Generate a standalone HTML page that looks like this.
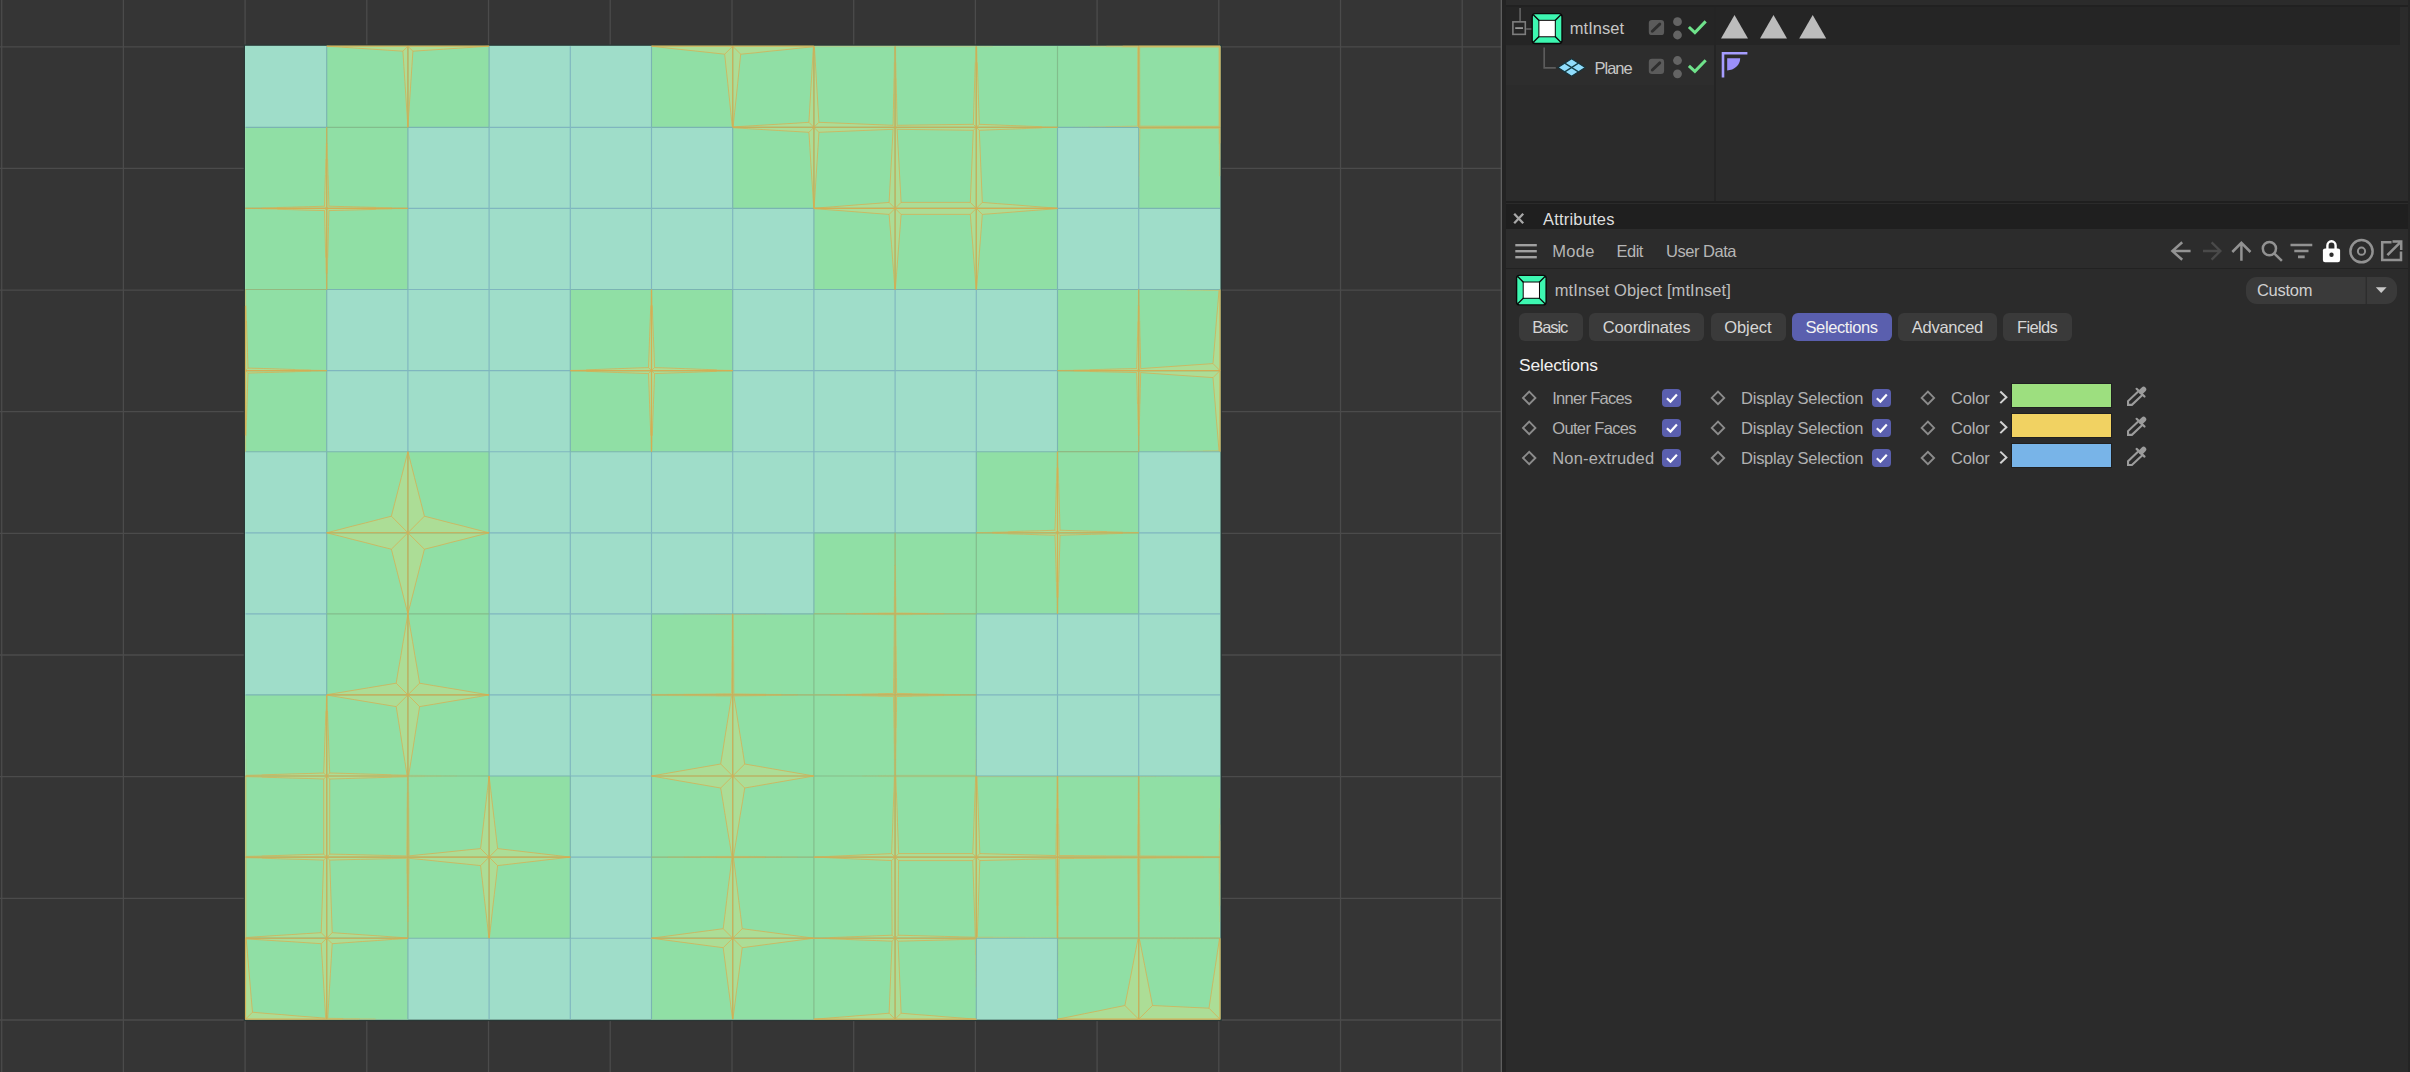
<!DOCTYPE html>
<html><head><meta charset="utf-8"><title>mtInset</title>
<style>
html,body{margin:0;padding:0;background:#2b2b2b;}
body{width:2410px;height:1072px;overflow:hidden;position:relative;font-family:"Liberation Sans",sans-serif;}
.vp{position:absolute;left:0;top:0;display:block}

.t{position:absolute;white-space:nowrap;line-height:1;}
.b{position:absolute;}
.ic{position:absolute;left:0;top:0;}

</style></head><body>
<svg class="vp" width="1502" height="1072" viewBox="0 0 1502 1072">
<rect width="1502" height="1072" fill="#353535"/>
<g stroke="#4b4b4b" stroke-width="1.3"><path d="M1.7 0V1072"/><path d="M123.4 0V1072"/><path d="M245.1 0V1072"/><path d="M366.8 0V1072"/><path d="M488.5 0V1072"/><path d="M610.2 0V1072"/><path d="M732 0V1072"/><path d="M853.7 0V1072"/><path d="M975.4 0V1072"/><path d="M1097.1 0V1072"/><path d="M1218.8 0V1072"/><path d="M1340.5 0V1072"/><path d="M1462.2 0V1072"/><path d="M0 46.8H1501"/><path d="M0 168.4H1501"/><path d="M0 290.1H1501"/><path d="M0 411.7H1501"/><path d="M0 533.4H1501"/><path d="M0 655H1501"/><path d="M0 776.7H1501"/><path d="M0 898.4H1501"/><path d="M0 1020H1501"/></g>
<rect x="245" y="45.8" width="975.5" height="974" fill="none" stroke="#2a3836" stroke-width="2.6"/>
<rect x="245" y="45.8" width="975.5" height="973.9" fill="#9fddc9"/>
<g fill="#acdd96">
<polygon points="326.7,46.2 407.9,46.2 407.9,127.3 326.7,127.3"/>
<polygon points="407.9,46.2 489.1,46.2 489.1,127.3 407.9,127.3"/>
<polygon points="651.5,46.2 732.7,46.2 732.7,127.3 651.5,127.3"/>
<polygon points="732.7,46.2 813.9,46.2 813.9,127.3 732.7,127.3"/>
<polygon points="813.9,46.2 895.1,46.2 895.1,127.3 813.9,127.3"/>
<polygon points="895.1,46.2 976.3,46.2 976.3,127.3 895.1,127.3"/>
<polygon points="976.3,46.2 1057.5,46.2 1057.5,127.3 976.3,127.3"/>
<polygon points="1057.5,46.2 1138.7,46.2 1138.7,127.3 1057.5,127.3"/>
<polygon points="1138.7,46.2 1220,46.2 1220,127.3 1138.7,127.3"/>
<polygon points="245.5,127.3 326.7,127.3 326.7,208.4 245.5,208.4"/>
<polygon points="326.7,127.3 407.9,127.3 407.9,208.4 326.7,208.4"/>
<polygon points="732.7,127.3 813.9,127.3 813.9,208.4 732.7,208.4"/>
<polygon points="813.9,127.3 895.1,127.3 895.1,208.4 813.9,208.4"/>
<polygon points="895.1,127.3 976.3,127.3 976.3,208.4 895.1,208.4"/>
<polygon points="976.3,127.3 1057.5,127.3 1057.5,208.4 976.3,208.4"/>
<polygon points="1138.7,127.3 1220,127.3 1220,208.4 1138.7,208.4"/>
<polygon points="245.5,208.4 326.7,208.4 326.7,289.5 245.5,289.5"/>
<polygon points="326.7,208.4 407.9,208.4 407.9,289.5 326.7,289.5"/>
<polygon points="813.9,208.4 895.1,208.4 895.1,289.5 813.9,289.5"/>
<polygon points="895.1,208.4 976.3,208.4 976.3,289.5 895.1,289.5"/>
<polygon points="976.3,208.4 1057.5,208.4 1057.5,289.5 976.3,289.5"/>
<polygon points="245.5,289.5 326.7,289.5 326.7,370.6 245.5,370.6"/>
<polygon points="570.3,289.5 651.5,289.5 651.5,370.6 570.3,370.6"/>
<polygon points="651.5,289.5 732.7,289.5 732.7,370.6 651.5,370.6"/>
<polygon points="1057.5,289.5 1138.7,289.5 1138.7,370.6 1057.5,370.6"/>
<polygon points="1138.7,289.5 1220,289.5 1220,370.6 1138.7,370.6"/>
<polygon points="245.5,370.6 326.7,370.6 326.7,451.7 245.5,451.7"/>
<polygon points="570.3,370.6 651.5,370.6 651.5,451.7 570.3,451.7"/>
<polygon points="651.5,370.6 732.7,370.6 732.7,451.7 651.5,451.7"/>
<polygon points="1057.5,370.6 1138.7,370.6 1138.7,451.7 1057.5,451.7"/>
<polygon points="1138.7,370.6 1220,370.6 1220,451.7 1138.7,451.7"/>
<polygon points="326.7,451.7 407.9,451.7 407.9,532.8 326.7,532.8"/>
<polygon points="407.9,451.7 489.1,451.7 489.1,532.8 407.9,532.8"/>
<polygon points="976.3,451.7 1057.5,451.7 1057.5,532.8 976.3,532.8"/>
<polygon points="1057.5,451.7 1138.7,451.7 1138.7,532.8 1057.5,532.8"/>
<polygon points="326.7,532.8 407.9,532.8 407.9,613.8 326.7,613.8"/>
<polygon points="407.9,532.8 489.1,532.8 489.1,613.8 407.9,613.8"/>
<polygon points="813.9,532.8 895.1,532.8 895.1,613.8 813.9,613.8"/>
<polygon points="895.1,532.8 976.3,532.8 976.3,613.8 895.1,613.8"/>
<polygon points="976.3,532.8 1057.5,532.8 1057.5,613.8 976.3,613.8"/>
<polygon points="1057.5,532.8 1138.7,532.8 1138.7,613.8 1057.5,613.8"/>
<polygon points="326.7,613.8 407.9,613.8 407.9,694.9 326.7,694.9"/>
<polygon points="407.9,613.8 489.1,613.8 489.1,694.9 407.9,694.9"/>
<polygon points="651.5,613.8 732.7,613.8 732.7,694.9 651.5,694.9"/>
<polygon points="732.7,613.8 813.9,613.8 813.9,694.9 732.7,694.9"/>
<polygon points="813.9,613.8 895.1,613.8 895.1,694.9 813.9,694.9"/>
<polygon points="895.1,613.8 976.3,613.8 976.3,694.9 895.1,694.9"/>
<polygon points="245.5,694.9 326.7,694.9 326.7,776 245.5,776"/>
<polygon points="326.7,694.9 407.9,694.9 407.9,776 326.7,776"/>
<polygon points="407.9,694.9 489.1,694.9 489.1,776 407.9,776"/>
<polygon points="651.5,694.9 732.7,694.9 732.7,776 651.5,776"/>
<polygon points="732.7,694.9 813.9,694.9 813.9,776 732.7,776"/>
<polygon points="813.9,694.9 895.1,694.9 895.1,776 813.9,776"/>
<polygon points="895.1,694.9 976.3,694.9 976.3,776 895.1,776"/>
<polygon points="245.5,776 326.7,776 326.7,857.1 245.5,857.1"/>
<polygon points="326.7,776 407.9,776 407.9,857.1 326.7,857.1"/>
<polygon points="407.9,776 489.1,776 489.1,857.1 407.9,857.1"/>
<polygon points="489.1,776 570.3,776 570.3,857.1 489.1,857.1"/>
<polygon points="651.5,776 732.7,776 732.7,857.1 651.5,857.1"/>
<polygon points="732.7,776 813.9,776 813.9,857.1 732.7,857.1"/>
<polygon points="813.9,776 895.1,776 895.1,857.1 813.9,857.1"/>
<polygon points="895.1,776 976.3,776 976.3,857.1 895.1,857.1"/>
<polygon points="976.3,776 1057.5,776 1057.5,857.1 976.3,857.1"/>
<polygon points="1057.5,776 1138.7,776 1138.7,857.1 1057.5,857.1"/>
<polygon points="1138.7,776 1220,776 1220,857.1 1138.7,857.1"/>
<polygon points="245.5,857.1 326.7,857.1 326.7,938.2 245.5,938.2"/>
<polygon points="326.7,857.1 407.9,857.1 407.9,938.2 326.7,938.2"/>
<polygon points="407.9,857.1 489.1,857.1 489.1,938.2 407.9,938.2"/>
<polygon points="489.1,857.1 570.3,857.1 570.3,938.2 489.1,938.2"/>
<polygon points="651.5,857.1 732.7,857.1 732.7,938.2 651.5,938.2"/>
<polygon points="732.7,857.1 813.9,857.1 813.9,938.2 732.7,938.2"/>
<polygon points="813.9,857.1 895.1,857.1 895.1,938.2 813.9,938.2"/>
<polygon points="895.1,857.1 976.3,857.1 976.3,938.2 895.1,938.2"/>
<polygon points="976.3,857.1 1057.5,857.1 1057.5,938.2 976.3,938.2"/>
<polygon points="1057.5,857.1 1138.7,857.1 1138.7,938.2 1057.5,938.2"/>
<polygon points="1138.7,857.1 1220,857.1 1220,938.2 1138.7,938.2"/>
<polygon points="245.5,938.2 326.7,938.2 326.7,1019.2 245.5,1019.2"/>
<polygon points="326.7,938.2 407.9,938.2 407.9,1019.2 326.7,1019.2"/>
<polygon points="651.5,938.2 732.7,938.2 732.7,1019.2 651.5,1019.2"/>
<polygon points="732.7,938.2 813.9,938.2 813.9,1019.2 732.7,1019.2"/>
<polygon points="813.9,938.2 895.1,938.2 895.1,1019.2 813.9,1019.2"/>
<polygon points="895.1,938.2 976.3,938.2 976.3,1019.2 895.1,1019.2"/>
<polygon points="1057.5,938.2 1138.7,938.2 1138.7,1019.2 1057.5,1019.2"/>
<polygon points="1138.7,938.2 1220,938.2 1220,1019.2 1138.7,1019.2"/>
</g>
<g fill="#90dfa5">
<polygon points="326.7,46.2 402.9,51.2 407.9,127.3 326.7,127.3"/>
<polygon points="412.9,51.2 489.1,46.2 489.1,127.3 407.9,127.3"/>
<polygon points="651.5,46.2 724.7,54.2 732.3,126.9 651.5,127.3"/>
<polygon points="740.7,54.2 813.4,46.8 808.9,122.3 733.1,126.9"/>
<polygon points="814.4,46.8 894.6,46.8 893.1,125.3 818.9,122.3"/>
<polygon points="895.6,46.8 975.8,46.8 973.3,124.3 897.1,125.3"/>
<polygon points="976.8,46.8 1057.5,46.2 1057.5,127.3 979.3,124.3"/>
<polygon points="1057.5,46.2 1137.7,47.2 1137.5,126.1 1057.5,127.3"/>
<polygon points="1139.7,47.2 1219,47.2 1219,126.3 1139.9,126.1"/>
<polygon points="245.5,127.3 326.7,127.3 324.5,206.2 245.5,208.4"/>
<polygon points="326.7,127.3 407.9,127.3 407.7,208.2 328.9,206.2"/>
<polygon points="733.1,127.7 808.9,132.3 813.7,208.2 732.7,208.4"/>
<polygon points="818.9,132.3 893.1,129.3 889.1,202.4 814.1,208.2"/>
<polygon points="897.1,129.3 973.3,130.3 970.3,202.4 901.1,202.4"/>
<polygon points="979.3,130.3 1057.5,127.3 1057.3,208.2 982.3,202.4"/>
<polygon points="1139.9,128.5 1219,128.3 1220,208.4 1138.7,208.4"/>
<polygon points="245.5,208.4 324.5,210.6 326.5,289.3 245.5,289.5"/>
<polygon points="328.9,210.6 407.7,208.6 407.9,289.5 326.9,289.3"/>
<polygon points="814.1,208.6 889.1,214.4 894.9,289.3 813.9,289.5"/>
<polygon points="901.1,214.4 970.3,214.4 976.1,289.3 895.3,289.3"/>
<polygon points="982.3,214.4 1057.3,208.6 1057.5,289.5 976.5,289.3"/>
<polygon points="245.5,289.5 326.5,289.7 326.5,370.4 248,368.1"/>
<polygon points="570.3,289.5 651.3,289.7 648.5,367.6 570.5,370.4"/>
<polygon points="651.7,289.7 732.7,289.5 732.5,370.4 654.5,367.6"/>
<polygon points="1057.5,289.5 1138.5,289.7 1136.7,368.6 1057.7,370.4"/>
<polygon points="1138.9,289.7 1219,290.5 1213,363.6 1140.7,368.6"/>
<polygon points="248,373.1 326.5,370.8 326.7,451.7 245.5,451.7"/>
<polygon points="570.5,370.8 648.5,373.6 651.3,451.5 570.3,451.7"/>
<polygon points="654.5,373.6 732.5,370.8 732.7,451.7 651.7,451.5"/>
<polygon points="1057.7,370.8 1136.7,372.6 1138.7,451.7 1057.7,451.5"/>
<polygon points="1140.7,372.6 1213,377.6 1219,450.7 1138.7,451.7"/>
<polygon points="326.7,451.7 407.9,451.7 391.4,516.2 326.7,532.8"/>
<polygon points="407.9,451.7 489.1,451.7 489.1,532.8 424.4,516.2"/>
<polygon points="976.3,451.7 1057.3,451.9 1055,530.2 976.3,532.8"/>
<polygon points="1057.7,451.9 1138.7,451.7 1138.5,532.5 1060,530.2"/>
<polygon points="326.7,532.8 391.4,549.2 407.9,613.8 326.7,613.8"/>
<polygon points="424.4,549.2 489.1,532.8 489.1,613.8 407.9,613.8"/>
<polygon points="813.9,532.8 895.1,532.8 894.1,612.8 813.9,613.8"/>
<polygon points="895.1,532.8 976.3,532.8 976.3,613.8 896.1,612.8"/>
<polygon points="976.3,532.8 1055,535.2 1057.3,613.6 976.3,613.8"/>
<polygon points="1060,535.2 1138.5,533 1138.7,613.8 1057.7,613.6"/>
<polygon points="326.7,613.8 407.9,613.8 396.2,683.2 326.9,694.7"/>
<polygon points="407.9,613.8 489.1,613.8 489.1,694.9 419.6,683.2"/>
<polygon points="651.5,613.8 731.9,614.6 731.5,693.7 652.1,694.3"/>
<polygon points="733.5,614.6 813.9,613.8 813.9,694.9 733.9,693.7"/>
<polygon points="813.9,613.8 894.1,614.8 893.6,693.4 813.9,694.9"/>
<polygon points="896.1,614.8 976.3,613.8 976.1,694.7 896.6,693.4"/>
<polygon points="245.5,694.9 326.5,695.1 323.7,773 246.2,775.3"/>
<polygon points="326.9,695.1 396.2,706.6 407.1,775.2 329.7,773"/>
<polygon points="419.6,706.6 489.1,694.9 489.1,776 408.7,775.2"/>
<polygon points="652.1,695.5 731.5,696.1 720.7,764 651.5,776"/>
<polygon points="733.9,696.1 813.9,694.9 813.9,776 744.7,764"/>
<polygon points="813.9,694.9 893.6,696.4 894.4,775.3 813.9,776"/>
<polygon points="896.6,696.4 976.1,695.1 975.6,775.3 895.8,775.3"/>
<polygon points="246.2,776.7 323.7,779 323.7,854.1 246.2,856.4"/>
<polygon points="329.7,779 407.1,776.8 406.7,855.9 329.7,854.1"/>
<polygon points="408.7,776.8 489.1,776 480.6,848.6 409.1,855.9"/>
<polygon points="489.1,776 570.3,776 570.3,857.1 497.6,848.6"/>
<polygon points="651.5,776 720.7,788 731.9,856.3 651.5,857.1"/>
<polygon points="744.7,788 813.9,776 813.9,857.1 733.5,856.3"/>
<polygon points="813.9,776 894.4,776.7 891.6,853.6 813.9,857.1"/>
<polygon points="895.8,776.7 975.6,776.7 972.8,853.6 898.6,853.6"/>
<polygon points="977,776.7 1056.8,776.7 1056,855.6 979.8,853.6"/>
<polygon points="1058.2,776.7 1138,776.7 1137.5,855.9 1059,855.6"/>
<polygon points="1139.4,776.7 1220,776 1219.2,856.3 1139.9,855.9"/>
<polygon points="246.2,857.8 323.7,860.1 321.2,932.7 246.2,937.5"/>
<polygon points="329.7,860.1 406.7,858.3 407.7,938 332.2,932.7"/>
<polygon points="409.1,858.3 480.6,865.6 488.9,938 408.1,938"/>
<polygon points="497.6,865.6 570.3,857.1 570.3,938.2 489.3,938"/>
<polygon points="651.5,857.1 731.9,857.9 723.2,928.7 651.5,938.2"/>
<polygon points="733.5,857.9 813.9,857.1 813.9,938.2 742.2,928.7"/>
<polygon points="813.9,857.1 891.6,860.6 892.1,935.2 813.9,938.2"/>
<polygon points="898.6,860.6 972.8,860.6 975.3,937.2 898.1,935.2"/>
<polygon points="979.8,860.6 1056,858.6 1056.8,937.5 977.3,937.2"/>
<polygon points="1059,858.6 1137.5,858.3 1138,937.5 1058.2,937.5"/>
<polygon points="1139.9,858.3 1219.2,857.9 1219.5,937.8 1139.4,937.5"/>
<polygon points="246.2,938.9 321.2,943.7 325.7,1018.2 252.5,1012.2"/>
<polygon points="332.2,943.7 407.7,938.4 407.9,1019.2 327.7,1018.2"/>
<polygon points="651.5,938.2 723.2,947.7 732.5,1019 651.5,1019.2"/>
<polygon points="742.2,947.7 813.9,938.2 813.9,1019.2 732.9,1019"/>
<polygon points="813.9,938.2 892.1,941.2 889.1,1013.2 813.9,1019.2"/>
<polygon points="898.1,941.2 975.3,939.2 976.3,1019.2 901.1,1013.2"/>
<polygon points="1058.2,938.9 1138,938.9 1124.9,1005.5 1057.5,1019.2"/>
<polygon points="1139.4,938.9 1219.5,938.6 1209,1008.2 1152.5,1005.5"/>
</g>
<g stroke="#7fb6bf" stroke-width="1.15" stroke-opacity="1" fill="none"><path d="M489.1 127.3L570.3 127.3"/><path d="M570.3 127.3L651.5 127.3"/><path d="M407.9 208.4L489.1 208.4"/><path d="M489.1 208.4L570.3 208.4"/><path d="M570.3 208.4L651.5 208.4"/><path d="M651.5 208.4L732.7 208.4"/><path d="M1057.5 208.4L1138.7 208.4"/><path d="M407.9 289.5L489.1 289.5"/><path d="M489.1 289.5L570.3 289.5"/><path d="M732.7 289.5L813.9 289.5"/><path d="M326.7 370.6L407.9 370.6"/><path d="M407.9 370.6L489.1 370.6"/><path d="M489.1 370.6L570.3 370.6"/><path d="M732.7 370.6L813.9 370.6"/><path d="M813.9 370.6L895.1 370.6"/><path d="M895.1 370.6L976.3 370.6"/><path d="M976.3 370.6L1057.5 370.6"/><path d="M489.1 451.7L570.3 451.7"/><path d="M732.7 451.7L813.9 451.7"/><path d="M813.9 451.7L895.1 451.7"/><path d="M895.1 451.7L976.3 451.7"/><path d="M245.5 532.8L326.7 532.8"/><path d="M489.1 532.8L570.3 532.8"/><path d="M570.3 532.8L651.5 532.8"/><path d="M651.5 532.8L732.7 532.8"/><path d="M732.7 532.8L813.9 532.8"/><path d="M1138.7 532.8L1220 532.8"/><path d="M245.5 613.8L326.7 613.8"/><path d="M489.1 613.8L570.3 613.8"/><path d="M570.3 613.8L651.5 613.8"/><path d="M1138.7 613.8L1220 613.8"/><path d="M489.1 694.9L570.3 694.9"/><path d="M570.3 694.9L651.5 694.9"/><path d="M976.3 694.9L1057.5 694.9"/><path d="M1057.5 694.9L1138.7 694.9"/><path d="M1138.7 694.9L1220 694.9"/><path d="M570.3 776L651.5 776"/><path d="M570.3 857.1L651.5 857.1"/><path d="M570.3 938.2L651.5 938.2"/><path d="M407.9 289.5L407.9 370.6"/><path d="M407.9 370.6L407.9 451.7"/><path d="M489.1 127.3L489.1 208.4"/><path d="M489.1 208.4L489.1 289.5"/><path d="M489.1 289.5L489.1 370.6"/><path d="M489.1 370.6L489.1 451.7"/><path d="M489.1 938.2L489.1 1019.2"/><path d="M570.3 46.2L570.3 127.3"/><path d="M570.3 127.3L570.3 208.4"/><path d="M570.3 208.4L570.3 289.5"/><path d="M570.3 451.7L570.3 532.8"/><path d="M570.3 532.8L570.3 613.8"/><path d="M570.3 613.8L570.3 694.9"/><path d="M570.3 694.9L570.3 776"/><path d="M570.3 938.2L570.3 1019.2"/><path d="M651.5 127.3L651.5 208.4"/><path d="M651.5 208.4L651.5 289.5"/><path d="M651.5 451.7L651.5 532.8"/><path d="M651.5 532.8L651.5 613.8"/><path d="M732.7 208.4L732.7 289.5"/><path d="M732.7 451.7L732.7 532.8"/><path d="M732.7 532.8L732.7 613.8"/><path d="M813.9 289.5L813.9 370.6"/><path d="M813.9 370.6L813.9 451.7"/><path d="M813.9 451.7L813.9 532.8"/><path d="M895.1 289.5L895.1 370.6"/><path d="M895.1 370.6L895.1 451.7"/><path d="M895.1 451.7L895.1 532.8"/><path d="M976.3 289.5L976.3 370.6"/><path d="M976.3 370.6L976.3 451.7"/><path d="M1057.5 613.8L1057.5 694.9"/><path d="M1057.5 694.9L1057.5 776"/><path d="M1138.7 208.4L1138.7 289.5"/><path d="M1138.7 613.8L1138.7 694.9"/><path d="M1138.7 694.9L1138.7 776"/></g>
<g stroke="#7ab4b2" stroke-width="1.15" stroke-opacity="1" fill="none"><path d="M245.5 127.3L326.7 127.3"/><path d="M407.9 127.3L489.1 127.3"/><path d="M651.5 127.3L732.7 127.3"/><path d="M1057.5 127.3L1138.7 127.3"/><path d="M732.7 208.4L813.9 208.4"/><path d="M1138.7 208.4L1220 208.4"/><path d="M326.7 289.5L407.9 289.5"/><path d="M570.3 289.5L651.5 289.5"/><path d="M651.5 289.5L732.7 289.5"/><path d="M813.9 289.5L895.1 289.5"/><path d="M895.1 289.5L976.3 289.5"/><path d="M976.3 289.5L1057.5 289.5"/><path d="M1057.5 289.5L1138.7 289.5"/><path d="M1138.7 289.5L1220 289.5"/><path d="M245.5 451.7L326.7 451.7"/><path d="M326.7 451.7L407.9 451.7"/><path d="M407.9 451.7L489.1 451.7"/><path d="M570.3 451.7L651.5 451.7"/><path d="M651.5 451.7L732.7 451.7"/><path d="M976.3 451.7L1057.5 451.7"/><path d="M1138.7 451.7L1220 451.7"/><path d="M813.9 532.8L895.1 532.8"/><path d="M895.1 532.8L976.3 532.8"/><path d="M651.5 613.8L732.7 613.8"/><path d="M732.7 613.8L813.9 613.8"/><path d="M976.3 613.8L1057.5 613.8"/><path d="M1057.5 613.8L1138.7 613.8"/><path d="M245.5 694.9L326.7 694.9"/><path d="M489.1 776L570.3 776"/><path d="M976.3 776L1057.5 776"/><path d="M1057.5 776L1138.7 776"/><path d="M1138.7 776L1220 776"/><path d="M407.9 938.2L489.1 938.2"/><path d="M489.1 938.2L570.3 938.2"/><path d="M976.3 938.2L1057.5 938.2"/><path d="M326.7 46.2L326.7 127.3"/><path d="M326.7 289.5L326.7 370.6"/><path d="M326.7 370.6L326.7 451.7"/><path d="M326.7 451.7L326.7 532.8"/><path d="M326.7 532.8L326.7 613.8"/><path d="M326.7 613.8L326.7 694.9"/><path d="M407.9 127.3L407.9 208.4"/><path d="M407.9 208.4L407.9 289.5"/><path d="M407.9 938.2L407.9 1019.2"/><path d="M489.1 46.2L489.1 127.3"/><path d="M489.1 451.7L489.1 532.8"/><path d="M489.1 532.8L489.1 613.8"/><path d="M489.1 613.8L489.1 694.9"/><path d="M489.1 694.9L489.1 776"/><path d="M570.3 289.5L570.3 370.6"/><path d="M570.3 370.6L570.3 451.7"/><path d="M570.3 776L570.3 857.1"/><path d="M570.3 857.1L570.3 938.2"/><path d="M651.5 46.2L651.5 127.3"/><path d="M651.5 613.8L651.5 694.9"/><path d="M651.5 694.9L651.5 776"/><path d="M651.5 776L651.5 857.1"/><path d="M651.5 857.1L651.5 938.2"/><path d="M651.5 938.2L651.5 1019.2"/><path d="M732.7 127.3L732.7 208.4"/><path d="M732.7 289.5L732.7 370.6"/><path d="M732.7 370.6L732.7 451.7"/><path d="M813.9 208.4L813.9 289.5"/><path d="M813.9 532.8L813.9 613.8"/><path d="M976.3 451.7L976.3 532.8"/><path d="M976.3 613.8L976.3 694.9"/><path d="M976.3 694.9L976.3 776"/><path d="M976.3 938.2L976.3 1019.2"/><path d="M1057.5 127.3L1057.5 208.4"/><path d="M1057.5 208.4L1057.5 289.5"/><path d="M1057.5 289.5L1057.5 370.6"/><path d="M1057.5 370.6L1057.5 451.7"/><path d="M1057.5 938.2L1057.5 1019.2"/><path d="M1138.7 127.3L1138.7 208.4"/><path d="M1138.7 451.7L1138.7 532.8"/><path d="M1138.7 532.8L1138.7 613.8"/></g>
<g stroke="#82bd8c" stroke-width="1.2" stroke-opacity="1" fill="none"><path d="M326.7 127.3L407.9 127.3"/><path d="M732.7 127.3L813.9 127.3"/><path d="M813.9 127.3L895.1 127.3"/><path d="M895.1 127.3L976.3 127.3"/><path d="M976.3 127.3L1057.5 127.3"/><path d="M1138.7 127.3L1220 127.3"/><path d="M245.5 208.4L326.7 208.4"/><path d="M326.7 208.4L407.9 208.4"/><path d="M813.9 208.4L895.1 208.4"/><path d="M895.1 208.4L976.3 208.4"/><path d="M976.3 208.4L1057.5 208.4"/><path d="M245.5 289.5L326.7 289.5"/><path d="M245.5 370.6L326.7 370.6"/><path d="M570.3 370.6L651.5 370.6"/><path d="M651.5 370.6L732.7 370.6"/><path d="M1057.5 370.6L1138.7 370.6"/><path d="M1138.7 370.6L1220 370.6"/><path d="M1057.5 451.7L1138.7 451.7"/><path d="M326.7 532.8L407.9 532.8"/><path d="M407.9 532.8L489.1 532.8"/><path d="M976.3 532.8L1057.5 532.8"/><path d="M1057.5 532.8L1138.7 532.8"/><path d="M326.7 613.8L407.9 613.8"/><path d="M407.9 613.8L489.1 613.8"/><path d="M813.9 613.8L895.1 613.8"/><path d="M895.1 613.8L976.3 613.8"/><path d="M326.7 694.9L407.9 694.9"/><path d="M407.9 694.9L489.1 694.9"/><path d="M651.5 694.9L732.7 694.9"/><path d="M732.7 694.9L813.9 694.9"/><path d="M813.9 694.9L895.1 694.9"/><path d="M895.1 694.9L976.3 694.9"/><path d="M245.5 776L326.7 776"/><path d="M326.7 776L407.9 776"/><path d="M407.9 776L489.1 776"/><path d="M651.5 776L732.7 776"/><path d="M732.7 776L813.9 776"/><path d="M813.9 776L895.1 776"/><path d="M895.1 776L976.3 776"/><path d="M245.5 857.1L326.7 857.1"/><path d="M326.7 857.1L407.9 857.1"/><path d="M407.9 857.1L489.1 857.1"/><path d="M489.1 857.1L570.3 857.1"/><path d="M651.5 857.1L732.7 857.1"/><path d="M732.7 857.1L813.9 857.1"/><path d="M813.9 857.1L895.1 857.1"/><path d="M895.1 857.1L976.3 857.1"/><path d="M976.3 857.1L1057.5 857.1"/><path d="M1057.5 857.1L1138.7 857.1"/><path d="M1138.7 857.1L1220 857.1"/><path d="M245.5 938.2L326.7 938.2"/><path d="M326.7 938.2L407.9 938.2"/><path d="M651.5 938.2L732.7 938.2"/><path d="M732.7 938.2L813.9 938.2"/><path d="M813.9 938.2L895.1 938.2"/><path d="M895.1 938.2L976.3 938.2"/><path d="M1057.5 938.2L1138.7 938.2"/><path d="M1138.7 938.2L1220 938.2"/><path d="M326.7 127.3L326.7 208.4"/><path d="M326.7 208.4L326.7 289.5"/><path d="M326.7 694.9L326.7 776"/><path d="M326.7 776L326.7 857.1"/><path d="M326.7 857.1L326.7 938.2"/><path d="M326.7 938.2L326.7 1019.2"/><path d="M407.9 46.2L407.9 127.3"/><path d="M407.9 451.7L407.9 532.8"/><path d="M407.9 532.8L407.9 613.8"/><path d="M407.9 613.8L407.9 694.9"/><path d="M407.9 694.9L407.9 776"/><path d="M407.9 776L407.9 857.1"/><path d="M407.9 857.1L407.9 938.2"/><path d="M489.1 776L489.1 857.1"/><path d="M489.1 857.1L489.1 938.2"/><path d="M651.5 289.5L651.5 370.6"/><path d="M651.5 370.6L651.5 451.7"/><path d="M732.7 46.2L732.7 127.3"/><path d="M732.7 613.8L732.7 694.9"/><path d="M732.7 694.9L732.7 776"/><path d="M732.7 776L732.7 857.1"/><path d="M732.7 857.1L732.7 938.2"/><path d="M732.7 938.2L732.7 1019.2"/><path d="M813.9 46.2L813.9 127.3"/><path d="M813.9 127.3L813.9 208.4"/><path d="M813.9 613.8L813.9 694.9"/><path d="M813.9 694.9L813.9 776"/><path d="M813.9 776L813.9 857.1"/><path d="M813.9 857.1L813.9 938.2"/><path d="M813.9 938.2L813.9 1019.2"/><path d="M895.1 46.2L895.1 127.3"/><path d="M895.1 127.3L895.1 208.4"/><path d="M895.1 208.4L895.1 289.5"/><path d="M895.1 532.8L895.1 613.8"/><path d="M895.1 613.8L895.1 694.9"/><path d="M895.1 694.9L895.1 776"/><path d="M895.1 776L895.1 857.1"/><path d="M895.1 857.1L895.1 938.2"/><path d="M895.1 938.2L895.1 1019.2"/><path d="M976.3 46.2L976.3 127.3"/><path d="M976.3 127.3L976.3 208.4"/><path d="M976.3 208.4L976.3 289.5"/><path d="M976.3 532.8L976.3 613.8"/><path d="M976.3 776L976.3 857.1"/><path d="M976.3 857.1L976.3 938.2"/><path d="M1057.5 46.2L1057.5 127.3"/><path d="M1057.5 451.7L1057.5 532.8"/><path d="M1057.5 532.8L1057.5 613.8"/><path d="M1057.5 776L1057.5 857.1"/><path d="M1057.5 857.1L1057.5 938.2"/><path d="M1138.7 46.2L1138.7 127.3"/><path d="M1138.7 289.5L1138.7 370.6"/><path d="M1138.7 370.6L1138.7 451.7"/><path d="M1138.7 776L1138.7 857.1"/><path d="M1138.7 857.1L1138.7 938.2"/><path d="M1138.7 938.2L1138.7 1019.2"/></g>
<g stroke="#dbac4e" fill="none"><path d="M814.4 46.8L894.6 46.8M895.6 46.8L975.8 46.8M976.8 46.8L993 46.6M1089.5 126.9L1073.5 127.1M1139 192.4L1139.2 176.5M1154.9 289.9L1170.9 290M1138.3 435.8L1138.7 451.7M1138.7 451.7L1139.1 435.8M683.7 614.2L699.8 614.3M652.1 694.3L652 678.2M765.7 614.3L781.8 614.2M797.9 694.7L781.9 694.4M976.1 694.7L960.2 694.5M246.1 759.2L245.9 743.1M457 775.7L440.9 775.5M652 711.6L652.1 695.5M781.9 695.4L797.9 695.2M878.3 775.4L862.2 775.6M960.2 695.4L976.1 695.1M975.9 727.2L975.8 743.2M975.8 743.2L975.7 759.3M440.9 776.5L457 776.3M699.8 856.6L683.7 856.8M781.8 856.8L765.7 856.6M862.2 776.4L878.3 776.6M1155.5 776.6L1171.6 776.4M1219.6 808.1L1219.5 824.2M683.7 857.4L699.8 857.6M765.7 857.6L781.8 857.4M1219.4 905.8L1219.5 921.8M1058 971L1058.1 954.9" stroke-opacity="0.10" stroke-width="0.8"/><path d="M976.3 46.2L992.6 46.2M1220 808.4L1220 824.6M1220 905.7L1220 921.9" stroke-opacity="0.10" stroke-width="1.2"/><path d="M1089.6 46.6L1105.7 46.9M326.7 127.3L326.3 143.1M261.3 208L245.5 208.4M407.7 208.2L391.9 207.8M327.1 143.1L326.7 127.3M1219.4 160.4L1219.5 176.4M245.5 208.4L261.3 208.9M326.1 273.6L326.5 289.3M391.9 209L407.7 208.6M326.9 289.3L327.3 273.6M246 305.2L245.5 289.5M1138.5 289.7L1138.2 305.5M1073.5 370L1057.7 370.4M1170.9 290L1186.9 290.2M1139.3 305.5L1138.9 289.7M245.5 451.7L246 435.9M1057.7 370.8L1073.5 371.1M1186.9 451.1L1170.8 451.3M992.1 532.2L976.3 532.8M894.7 564.8L894.5 580.8M862.1 613.2L846 613.4M944.3 613.4L928.2 613.2M895.7 580.8L895.5 564.8M976.3 532.8L992.1 533.2M699.8 614.3L715.8 614.5M731.9 614.6L731.8 630.4M668 694.2L652.1 694.3M749.6 614.5L765.7 614.3M733.6 630.4L733.5 614.6M846 614.2L862.1 614.4M845.8 694.3L829.9 694.6M895.1 694.9L893.6 693.4M928.2 614.4L944.3 614.2M895.1 694.9L896.6 693.4M246.2 775.3L246.1 759.2M440.9 775.5L424.8 775.4M652.1 695.5L668 695.6M829.9 695.2L845.8 695.5M895.1 694.9L893.6 696.4M894.4 775.3L878.3 775.4M895.1 694.9L896.6 696.4M975.7 759.3L975.6 775.3M407.1 776.8L407 792.6M424.8 776.6L440.9 776.5M408.8 792.6L408.7 776.8M715.8 856.4L699.8 856.6M765.7 856.6L749.6 856.4M878.3 776.6L894.4 776.7M1057.5 857.1L1056 855.6M1138 776.7L1137.9 792.5M1057.5 857.1L1059 855.6M1139.4 776.7L1155.5 776.6M1219.5 824.2L1219.3 840.2M1219.2 856.3L1203.3 856.2M1139.5 792.5L1139.4 776.7M407.3 906.1L407.5 922M408.3 922L408.5 906.1M699.8 857.6L715.8 857.7M749.6 857.7L765.7 857.6M1057.5 857.1L1056 858.6M1056.8 937.5L1040.9 937.4M1040.9 937.4L1025 937.3M1057.5 857.1L1059 858.6M1137.9 921.6L1138 937.5M1203.3 858L1219.2 857.9M1219.2 873.9L1219.3 889.8M1219.3 889.8L1219.4 905.8M1139.4 937.5L1139.5 921.6M375.8 1018.9L359.8 1018.6M975.7 971.2L975.9 987.2M1058.1 954.9L1058.2 938.9" stroke-opacity="0.20" stroke-width="0.8"/><path d="M245.5 289.5L326.7 289.5M1057.5 451.7L1138.7 451.7M651.5 857.1L667.8 857.1M797.7 857.1L813.9 857.1" stroke-opacity="0.20" stroke-width="1.1"/><path d="M813.9 46.2L895.1 46.2M895.1 46.2L976.3 46.2" stroke-opacity="0.20" stroke-width="1.2"/><path d="M894.6 46.8L894.3 62.5M895.9 62.5L895.6 46.8M1057.5 127.3L1041.9 126.7M1105.7 46.9L1121.7 47M1105.5 126.6L1089.5 126.9M1041.9 127.9L1057.5 127.3M1219.2 144.3L1219.4 160.4M1139.2 176.5L1139.5 160.5M326.5 370.4L310.8 369.9M310.8 371.2L326.5 370.8M1202.9 450.9L1186.9 451.1M1057.3 451.9L1056.9 467.5M1138.5 532.5L1122.8 532.1M1058.2 467.5L1057.7 451.9M894.5 580.8L894.3 596.8M878.1 613L862.1 613.2M928.2 613.2L912.2 613M895.9 596.8L895.7 580.8M1056.9 598L1057.3 613.6M1122.8 533.4L1138.5 533M1057.7 613.6L1058.2 598M715.8 614.5L731.9 614.6M683.9 694.1L668 694.2M733.5 614.6L749.6 614.5M781.9 694.4L765.9 694.2M862.1 614.4L878.1 614.6M912.2 614.6L928.2 614.4M960.2 694.5L944.3 694.2M424.8 775.4L408.7 775.2M668 695.6L683.9 695.8M765.9 695.6L781.9 695.4M894.3 759.5L894.4 775.3M944.3 695.6L960.2 695.4M975.6 775.3L895.8 775.3M895.8 775.3L896 759.5M246.2 856.4L246.2 776.7M408.7 776.8L424.8 776.6M731.9 856.3L715.8 856.4M749.6 856.4L733.5 856.3M895.8 776.7L975.6 776.7M977 776.7L1056.8 776.7M1056.8 776.7L1056.7 792.5M1058.2 776.7L1138 776.7M1137.9 792.5L1137.8 808.4M1058.4 792.5L1058.2 776.7M1219.3 840.2L1219.2 856.3M1139.6 808.4L1139.5 792.5M246.2 937.5L246.2 857.8M407.1 890.2L407.3 906.1M408.5 906.1L408.7 890.2M715.8 857.7L731.9 857.9M733.5 857.9L749.6 857.7M829.6 937.6L813.9 938.2M1056.7 921.7L1056.8 937.5M1025 937.3L1009.1 937.3M1137.8 905.8L1137.9 921.6M1138 937.5L1058.2 937.5M1058.2 937.5L1058.4 921.7M1219.2 857.9L1219.2 873.9M1219.5 937.8L1139.4 937.5M1139.5 921.6L1139.6 905.8M359.8 1018.6L343.7 1018.5M813.9 938.2L829.6 938.8M975.5 955.2L975.7 971.2M1058.2 938.9L1138 938.9M1139.4 938.9L1219.5 938.6" stroke-opacity="0.30" stroke-width="0.8"/><path d="M813.9 613.8L830.2 613.8M960.1 613.8L976.3 613.8M895.1 532.8L895.1 549" stroke-opacity="0.30" stroke-width="1.1"/><path d="M1090 46.2L1106.3 46.2M359.2 1019.2L375.4 1019.2M1220 159.8L1220 176M1220 824.6L1220 840.9M1220 889.5L1220 905.7" stroke-opacity="0.30" stroke-width="1.2"/><path d="M651.3 289.7L650.8 305.3M586.1 369.8L570.5 370.4M732.5 370.4L716.9 369.8M652.3 305.3L651.7 289.7M1186.9 290.2L1202.9 290.3M570.5 370.8L586.1 371.3M650.8 435.9L651.3 451.5M716.9 371.3L732.5 370.8M651.7 451.5L652.3 435.9M1137.9 420L1138.3 435.8M1139.1 435.8L1139.5 420M731.8 630.4L731.8 646.3M699.8 694L683.9 694.1M733.7 646.3L733.6 630.4M894.1 614.8L894 630.5M861.8 694L845.8 694.3M896.2 630.5L896.1 614.8M326.5 695.1L325.9 710.7M327.5 710.7L326.9 695.1M683.9 695.8L699.8 695.9M845.8 695.5L861.8 695.8M894.1 743.7L894.3 759.5M896 759.5L896.2 743.7M407 792.6L406.9 808.4M408.9 808.4L408.8 792.6M1056.7 792.5L1056.5 808.3M1137.8 808.4L1137.7 824.2M1058.6 808.3L1058.4 792.5M1203.3 856.2L1187.5 856.1M1139.7 824.2L1139.6 808.4M1056.5 905.9L1056.7 921.7M1009.1 937.3L993.2 937.2M1137.7 890L1137.8 905.8M1058.4 921.7L1058.6 905.9M1187.5 858L1203.3 858M1139.6 905.8L1139.7 890" stroke-opacity="0.40" stroke-width="0.8"/><path d="M797.7 694.9L813.9 694.9M813.9 694.9L830.2 694.9M667.8 857.1L684 857.1M781.4 857.1L797.7 857.1" stroke-opacity="0.40" stroke-width="1.1"/><path d="M245.5 289.5L245.5 305.7M245.5 435.4L245.5 451.7M1220 873.3L1220 889.5" stroke-opacity="0.40" stroke-width="1.2"/><path d="M895.1 127.3L893.1 125.3M975.8 46.8L975.3 62.3M895.1 127.3L897.1 125.3M977.3 62.3L976.8 46.8M1121.7 47L1137.7 47.2M1121.5 126.4L1105.5 126.6M326.3 143.1L325.8 158.9M277.1 207.5L261.3 208M327.6 158.9L327.1 143.1M895.1 127.3L893.1 129.3M895.1 127.3L897.1 129.3M1219 128.3L1219.2 144.3M1139.5 160.5L1139.7 144.5M261.3 208.9L277.1 209.3M1138.2 305.5L1137.8 321.3M1089.3 369.7L1073.5 370M1138.7 370.6L1136.7 368.6M1202.9 290.3L1219 290.5M1139.7 321.3L1139.3 305.5M1138.7 370.6L1140.7 368.6M1073.5 371.1L1089.3 371.5M1138.7 370.6L1136.7 372.6M1138.7 370.6L1140.7 372.6M1219 450.7L1202.9 450.9M894.3 596.8L894.1 612.8M894.1 612.8L878.1 613M912.2 613L896.1 612.8M896.1 612.8L895.9 596.8M731.8 646.3L731.7 662.1M715.6 693.8L699.8 694M765.9 694.2L749.9 694M733.8 662.1L733.7 646.3M878.1 614.6L894.1 614.8M894 630.5L893.9 646.3M896.1 614.8L912.2 614.6M944.3 694.2L928.4 693.9M896.3 646.3L896.2 630.5M699.8 695.9L715.6 696M749.9 695.9L765.9 695.6M928.4 695.9L944.3 695.6M406.9 808.4L406.9 824.2M408.9 824.2L408.9 808.4M829.5 856.4L813.9 857.1M1137.5 855.9L1121.8 855.8M1187.5 856.1L1171.6 856M406.9 874.2L407.1 890.2M408.7 890.2L408.9 874.2M813.9 857.1L829.5 857.8M993.2 937.2L977.3 937.2M1121.8 858.3L1137.5 858.3M1171.6 858.1L1187.5 858M343.7 1018.5L327.7 1018.2M975.3 939.2L975.5 955.2" stroke-opacity="0.50" stroke-width="0.8"/><path d="M830.2 613.8L846.4 613.8M943.9 613.8L960.1 613.8M960.1 694.9L976.3 694.9M684 857.1L700.2 857.1M765.2 857.1L781.4 857.1M407.9 921.9L407.9 938.2M895.1 549L895.1 565.2" stroke-opacity="0.50" stroke-width="1.1"/><path d="M1106.3 46.2L1122.5 46.2M342.9 1019.2L359.2 1019.2M245.5 776L245.5 857.1M245.5 857.1L245.5 938.2M1220 143.5L1220 159.8M1220 840.9L1220 857.1M1220 857.1L1220 873.3" stroke-opacity="0.50" stroke-width="1.2"/><path d="M894.3 62.5L894 78.2M896.2 78.2L895.9 62.5M1137.5 126.1L1121.5 126.4M1139.7 47.2L1219 47.2M1219 47.2L1219 126.3M326.7 208.4L324.5 206.2M391.9 207.8L376.2 207.4M326.7 208.4L328.9 206.2M1139.7 144.5L1139.9 128.5M325.7 257.8L326.1 273.6M326.7 208.4L324.5 210.6M376.2 209.4L391.9 209M326.7 208.4L328.9 210.6M327.3 273.6L327.7 257.8M246.5 320.9L246 305.2M246 435.9L246.5 420.2M1007.8 531.8L992.1 532.2M992.1 533.2L1007.8 533.8M731.7 662.1L731.6 677.9M749.9 694L733.9 693.7M733.8 677.9L733.8 662.1M261.7 774.8L246.2 775.3M733.9 696.1L749.9 695.9M894 728L894.1 743.7M896.2 743.7L896.3 728M246.2 776.7L261.7 777.2M261.7 855.9L246.2 856.4M406.9 824.2L406.8 840.1M409 840.1L408.9 824.2M1056.5 808.3L1056.4 824M1137.7 824.2L1137.6 840M1121.8 855.8L1106.1 855.8M1058.7 824L1058.6 808.3M1171.6 856L1155.8 856M1139.8 840L1139.7 824.2M246.2 857.8L261.7 858.2M1056.4 890.1L1056.5 905.9M1106.1 858.4L1121.8 858.3M1137.6 874.1L1137.7 890M1058.6 905.9L1058.7 890.1M1155.8 858.2L1171.6 858.1M1139.7 890L1139.8 874.1" stroke-opacity="0.60" stroke-width="0.8"/><path d="M781.4 694.9L797.7 694.9M1138.7 435.4L1138.7 451.7" stroke-opacity="0.60" stroke-width="1.1"/><path d="M1137.7 47.2L1137.5 126.1M1219 126.3L1139.9 126.1M1139.9 126.1L1139.7 47.2M1139.9 128.5L1219 128.3M310.8 369.9L295.1 369.5M245.5 370.6L248 368.1M295.1 371.7L310.8 371.2M245.5 370.6L248 373.1M1137.5 404.2L1137.9 420M1139.5 420L1139.9 404.2M1056.9 467.5L1056.4 483.2M1057.5 532.8L1055 530.2M1122.8 532.1L1107.1 531.6M1058.7 483.2L1058.2 467.5M1057.5 532.8L1060 530.2M1056.4 582.3L1056.9 598M1057.5 532.8L1055 535.2M1107.1 533.9L1122.8 533.4M1057.5 532.8L1060 535.2M1058.2 598L1058.7 582.3M731.6 677.9L731.5 693.7M731.5 693.7L715.6 693.8M733.9 693.7L733.8 677.9M893.9 646.3L893.8 662M877.7 693.7L861.8 694M928.4 693.9L912.5 693.7M896.4 662L896.3 646.3M407.1 775.2L391.6 774.8M715.6 696L731.5 696.1M861.8 695.8L877.7 696.1M912.5 696.2L928.4 695.9M391.6 777.2L407.1 776.8M406.8 840.1L406.7 855.9M409.1 855.9L409 840.1M1137.6 840L1137.5 855.9M1106.1 855.8L1090.4 855.7M1155.8 856L1139.9 855.9M1139.9 855.9L1139.8 840M406.7 858.3L406.9 874.2M408.9 874.2L409.1 858.3M1090.4 858.5L1106.1 858.4M1137.5 858.3L1137.6 874.1M1139.9 858.3L1155.8 858.2M1139.8 874.1L1139.9 858.3" stroke-opacity="0.70" stroke-width="0.8"/><path d="M245.5 208.4L261.7 208.4M1057.5 370.6L1073.8 370.6M976.3 532.8L992.6 532.8M846.4 613.8L862.7 613.8M927.6 613.8L943.9 613.8M651.5 694.9L667.8 694.9M830.2 694.9L846.4 694.9M700.2 857.1L716.5 857.1M749 857.1L765.2 857.1M326.7 127.3L326.7 143.5M407.9 905.7L407.9 921.9M895.1 565.2L895.1 581.4M1138.7 289.5L1138.7 305.7M1138.7 776L1138.7 792.2M1138.7 921.9L1138.7 938.2" stroke-opacity="0.70" stroke-width="1.1"/><path d="M326.7 46.2L341.9 47.2M406.9 112.1L407.9 127.3M473.9 47.2L489.1 46.2M407.9 127.3L408.9 112.1M894 78.2L893.7 93.9M896.5 93.9L896.2 78.2M1041.9 126.7L1026.3 126.1M325.8 158.9L325.4 174.7M292.9 207.1L277.1 207.5M328 174.7L327.6 158.9M1026.3 128.5L1041.9 127.9M277.1 209.3L292.9 209.7M1137.8 321.3L1137.5 337M1105.1 369.3L1089.3 369.7M1140 337L1139.7 321.3M1089.3 371.5L1105.1 371.9M893.8 662L893.7 677.7M896.5 677.7L896.4 662M893.8 712.2L894 728M896.3 728L896.5 712.2M406.7 855.9L391.3 855.5M894.4 776.7L893.9 792.1M975.6 776.7L975.1 792.1M896.4 792.1L895.8 776.7M1056.4 824L1056.2 839.8M977.6 792.1L977 776.7M1090.4 855.7L1074.7 855.6M1058.9 839.8L1058.7 824M391.3 858.6L406.7 858.3M845.2 937L829.6 937.6M975.3 937.2L959.9 936.8M1056.2 874.4L1056.4 890.1M1074.7 858.5L1090.4 858.5M1058.7 890.1L1058.9 874.4M829.6 938.8L845.2 939.4M959.9 939.6L975.3 939.2" stroke-opacity="0.80" stroke-width="0.8"/><path d="M391.7 208.4L407.9 208.4M310.5 370.6L326.7 370.6M1122.5 532.8L1138.7 532.8M667.8 694.9L684 694.9M765.2 694.9L781.4 694.9M943.9 694.9L960.1 694.9M716.5 857.1L732.7 857.1M732.7 857.1L749 857.1M1203.7 857.1L1220 857.1M326.7 273.3L326.7 289.5M407.9 776L407.9 792.2M732.7 613.8L732.7 630M895.1 759.8L895.1 776M1057.5 451.7L1057.5 467.9M1057.5 597.6L1057.5 613.8M1057.5 776L1057.5 792.2M1057.5 921.9L1057.5 938.2" stroke-opacity="0.80" stroke-width="1.1"/><path d="M1122.5 46.2L1138.7 46.2M326.7 1019.2L342.9 1019.2M1220 127.3L1220 143.5" stroke-opacity="0.80" stroke-width="1.2"/><path d="M341.9 47.2L357.2 48.2M357.2 48.2L372.4 49.2M372.4 49.2L387.7 50.2M387.7 50.2L402.9 51.2M402.9 51.2L403.9 66.5M403.9 66.5L404.9 81.7M404.9 81.7L405.9 96.9M405.9 96.9L406.9 112.1M407.9 46.2L402.9 51.2M412.9 51.2L428.1 50.2M428.1 50.2L443.4 49.2M443.4 49.2L458.6 48.2M458.6 48.2L473.9 47.2M407.9 46.2L412.9 51.2M408.9 112.1L409.9 96.9M409.9 96.9L410.9 81.7M410.9 81.7L411.9 66.5M411.9 66.5L412.9 51.2M651.5 46.2L666.2 47.9M666.2 47.9L680.8 49.5M680.8 49.5L695.4 51M695.4 51L710.1 52.6M710.1 52.6L724.7 54.2M724.7 54.2L726.2 68.8M726.2 68.8L727.8 83.3M727.8 83.3L729.3 97.9M729.3 97.9L730.8 112.4M730.8 112.4L732.3 126.9M732.7 46.2L724.7 54.2M740.7 54.2L755.3 52.8M755.3 52.8L769.8 51.2M769.8 51.2L784.3 49.8M784.3 49.8L798.9 48.2M798.9 48.2L813.4 46.8M732.7 46.2L740.7 54.2M813.4 46.8L812.5 61.9M812.5 61.9L811.6 77M811.6 77L810.7 92.1M810.7 92.1L809.8 107.2M809.8 107.2L808.9 122.3M808.9 122.3L793.8 123.3M793.8 123.3L778.6 124.2M778.6 124.2L763.4 125.1M763.4 125.1L748.3 126M748.3 126L733.1 126.9M813.9 127.3L808.9 122.3M733.1 126.9L734.6 112.4M734.6 112.4L736.2 97.9M736.2 97.9L737.7 83.3M737.7 83.3L739.2 68.8M739.2 68.8L740.7 54.2M893.7 93.9L893.4 109.6M893.4 109.6L893.1 125.3M893.1 125.3L818.9 122.3M818.9 122.3L818 107.2M818 107.2L817.1 92.1M817.1 92.1L816.2 77M816.2 77L815.3 61.9M815.3 61.9L814.4 46.8M813.9 127.3L818.9 122.3M975.3 62.3L974.8 77.8M974.8 77.8L974.3 93.3M974.3 93.3L973.8 108.8M973.8 108.8L973.3 124.3M973.3 124.3L897.1 125.3M976.3 127.3L973.3 124.3M897.1 125.3L896.8 109.6M896.8 109.6L896.5 93.9M1026.3 126.1L1010.6 125.5M1010.6 125.5L995 124.9M995 124.9L979.3 124.3M979.3 124.3L978.8 108.8M978.8 108.8L978.3 93.3M978.3 93.3L977.8 77.8M977.8 77.8L977.3 62.3M976.3 127.3L979.3 124.3M325.4 174.7L324.9 190.4M324.9 190.4L324.5 206.2M324.5 206.2L308.7 206.7M308.7 206.7L292.9 207.1M376.2 207.4L360.4 207M360.4 207L344.7 206.6M344.7 206.6L328.9 206.2M328.9 206.2L328.5 190.4M328.5 190.4L328 174.7M733.1 127.7L748.3 128.7M748.3 128.7L763.4 129.6M763.4 129.6L778.6 130.5M778.6 130.5L793.8 131.4M793.8 131.4L808.9 132.3M808.9 132.3L809.9 147.5M809.9 147.5L810.8 162.7M810.8 162.7L811.8 177.9M811.8 177.9L812.8 193M812.8 193L813.7 208.2M813.9 127.3L808.9 132.3M818.9 132.3L893.1 129.3M813.9 127.3L818.9 132.3M893.1 129.3L889.1 202.4M889.1 202.4L874.1 203.6M874.1 203.6L859.1 204.7M859.1 204.7L844.1 205.9M844.1 205.9L829.1 207.1M829.1 207.1L814.1 208.2M895.1 208.4L889.1 202.4M814.1 208.2L815.1 193M815.1 193L816 177.9M816 177.9L817 162.7M817 162.7L818 147.5M818 147.5L818.9 132.3M897.1 129.3L973.3 130.3M973.3 130.3L970.3 202.4M976.3 127.3L973.3 130.3M970.3 202.4L901.1 202.4M976.3 208.4L970.3 202.4M901.1 202.4L897.1 129.3M895.1 208.4L901.1 202.4M979.3 130.3L995 129.7M995 129.7L1010.6 129.1M1010.6 129.1L1026.3 128.5M976.3 127.3L979.3 130.3M1057.3 208.2L1042.3 207.1M1042.3 207.1L1027.3 205.9M1027.3 205.9L1012.3 204.7M1012.3 204.7L997.3 203.6M997.3 203.6L982.3 202.4M982.3 202.4L979.3 130.3M976.3 208.4L982.3 202.4M292.9 209.7L308.7 210.2M308.7 210.2L324.5 210.6M324.5 210.6L324.9 226.4M324.9 226.4L325.3 242.1M325.3 242.1L325.7 257.8M328.9 210.6L344.7 210.2M344.7 210.2L360.4 209.8M360.4 209.8L376.2 209.4M327.7 257.8L328.1 242.1M328.1 242.1L328.5 226.4M328.5 226.4L328.9 210.6M814.1 208.6L829.1 209.8M829.1 209.8L844.1 210.9M844.1 210.9L859.1 212.1M859.1 212.1L874.1 213.3M874.1 213.3L889.1 214.4M889.1 214.4L890.3 229.4M890.3 229.4L891.5 244.4M891.5 244.4L892.6 259.3M892.6 259.3L893.8 274.3M893.8 274.3L894.9 289.3M895.1 208.4L889.1 214.4M901.1 214.4L970.3 214.4M895.1 208.4L901.1 214.4M970.3 214.4L971.5 229.4M971.5 229.4L972.7 244.4M972.7 244.4L973.8 259.3M973.8 259.3L975 274.3M975 274.3L976.1 289.3M976.3 208.4L970.3 214.4M895.3 289.3L896.5 274.3M896.5 274.3L897.7 259.3M897.7 259.3L898.8 244.4M898.8 244.4L900 229.4M900 229.4L901.1 214.4M982.3 214.4L997.3 213.3M997.3 213.3L1012.3 212.1M1012.3 212.1L1027.3 210.9M1027.3 210.9L1042.3 209.8M1042.3 209.8L1057.3 208.6M976.3 208.4L982.3 214.4M976.5 289.3L977.7 274.3M977.7 274.3L978.9 259.3M978.9 259.3L980 244.4M980 244.4L981.2 229.4M981.2 229.4L982.3 214.4M295.1 369.5L279.4 369M279.4 369L263.7 368.5M263.7 368.5L248 368.1M248 368.1L247.5 352.4M247.5 352.4L247 336.6M247 336.6L246.5 320.9M650.8 305.3L650.2 320.9M650.2 320.9L649.6 336.4M649.6 336.4L649.1 352M649.1 352L648.5 367.6M648.5 367.6L632.9 368.1M632.9 368.1L617.3 368.7M617.3 368.7L601.7 369.3M601.7 369.3L586.1 369.8M651.5 370.6L648.5 367.6M716.9 369.8L701.3 369.3M701.3 369.3L685.7 368.7M685.7 368.7L670.1 368.1M670.1 368.1L654.5 367.6M654.5 367.6L654 352M654 352L653.4 336.4M653.4 336.4L652.8 320.9M652.8 320.9L652.3 305.3M651.5 370.6L654.5 367.6M1137.5 337L1137.1 352.8M1137.1 352.8L1136.7 368.6M1136.7 368.6L1120.9 368.9M1120.9 368.9L1105.1 369.3M1219 290.5L1217.8 305.1M1217.8 305.1L1216.5 319.7M1216.5 319.7L1215.4 334.3M1215.4 334.3L1214.2 349M1214.2 349L1213 363.6M1213 363.6L1140.7 368.6M1220 370.6L1213 363.6M1140.7 368.6L1140.4 352.8M1140.4 352.8L1140 337M248 373.1L263.7 372.6M263.7 372.6L279.4 372.2M279.4 372.2L295.1 371.7M246.5 420.2L247 404.5M247 404.5L247.5 388.8M247.5 388.8L248 373.1M586.1 371.3L601.7 371.9M601.7 371.9L617.3 372.5M617.3 372.5L632.9 373M632.9 373L648.5 373.6M648.5 373.6L649.1 389.2M649.1 389.2L649.6 404.7M649.6 404.7L650.2 420.3M650.2 420.3L650.8 435.9M651.5 370.6L648.5 373.6M654.5 373.6L670.1 373M670.1 373L685.7 372.5M685.7 372.5L701.3 371.9M701.3 371.9L716.9 371.3M651.5 370.6L654.5 373.6M652.3 435.9L652.8 420.3M652.8 420.3L653.4 404.7M653.4 404.7L654 389.2M654 389.2L654.5 373.6M1105.1 371.9L1120.9 372.2M1120.9 372.2L1136.7 372.6M1136.7 372.6L1137.1 388.4M1137.1 388.4L1137.5 404.2M1140.7 372.6L1213 377.6M1213 377.6L1214.2 392.2M1214.2 392.2L1215.4 406.8M1215.4 406.8L1216.5 421.4M1216.5 421.4L1217.8 436M1217.8 436L1219 450.7M1220 370.6L1213 377.6M1139.9 404.2L1140.3 388.4M1140.3 388.4L1140.7 372.6M407.9 451.7L404.6 464.6M404.6 464.6L401.3 477.5M401.3 477.5L398 490.4M398 490.4L394.7 503.3M394.7 503.3L391.4 516.2M391.4 516.2L378.5 519.5M378.5 519.5L365.5 522.9M365.5 522.9L352.6 526.1M352.6 526.1L339.6 529.5M339.6 529.5L326.7 532.8M407.9 532.8L391.4 516.2M489.1 532.8L476.2 529.5M476.2 529.5L463.2 526.1M463.2 526.1L450.3 522.9M450.3 522.9L437.3 519.5M437.3 519.5L424.4 516.2M424.4 516.2L421.1 503.3M421.1 503.3L417.8 490.4M417.8 490.4L414.5 477.5M414.5 477.5L411.2 464.6M411.2 464.6L407.9 451.7M407.9 532.8L424.4 516.2M1056.4 483.2L1056 498.9M1056 498.9L1055.5 514.6M1055.5 514.6L1055 530.2M1055 530.2L1039.3 530.8M1039.3 530.8L1023.6 531.2M1023.6 531.2L1007.8 531.8M1107.1 531.6L1091.4 531.2M1091.4 531.2L1075.7 530.7M1075.7 530.7L1060 530.2M1060 530.2L1059.6 514.6M1059.6 514.6L1059.1 498.9M1059.1 498.9L1058.7 483.2M326.7 532.8L339.6 536M339.6 536L352.6 539.4M352.6 539.4L365.5 542.6M365.5 542.6L378.5 546M378.5 546L391.4 549.2M391.4 549.2L394.7 562.2M394.7 562.2L398 575.1M398 575.1L401.3 588M401.3 588L404.6 600.9M404.6 600.9L407.9 613.8M407.9 532.8L391.4 549.2M424.4 549.2L437.3 546M437.3 546L450.3 542.6M450.3 542.6L463.2 539.4M463.2 539.4L476.2 536M476.2 536L489.1 532.8M407.9 532.8L424.4 549.2M407.9 613.8L411.2 600.9M411.2 600.9L414.5 588M414.5 588L417.8 575.1M417.8 575.1L421.1 562.2M421.1 562.2L424.4 549.2M1007.8 533.8L1023.6 534.2M1023.6 534.2L1039.3 534.8M1039.3 534.8L1055 535.2M1055 535.2L1055.5 550.9M1055.5 550.9L1056 566.6M1056 566.6L1056.4 582.3M1060 535.2L1075.7 534.8M1075.7 534.8L1091.4 534.3M1091.4 534.3L1107.1 533.9M1058.7 582.3L1059.1 566.6M1059.1 566.6L1059.6 550.9M1059.6 550.9L1060 535.2M407.9 613.8L405.6 627.7M405.6 627.7L403.2 641.6M403.2 641.6L400.9 655.5M400.9 655.5L398.5 669.3M398.5 669.3L396.2 683.2M396.2 683.2L382.3 685.5M382.3 685.5L368.5 687.8M368.5 687.8L354.6 690.1M354.6 690.1L340.8 692.4M340.8 692.4L326.9 694.7M407.9 694.9L396.2 683.2M489.1 694.9L475.2 692.6M475.2 692.6L461.3 690.2M461.3 690.2L447.4 687.9M447.4 687.9L433.5 685.6M433.5 685.6L419.6 683.2M419.6 683.2L417.3 669.3M417.3 669.3L414.9 655.5M414.9 655.5L412.6 641.6M412.6 641.6L410.2 627.7M410.2 627.7L407.9 613.8M407.9 694.9L419.6 683.2M893.7 677.7L893.6 693.4M893.6 693.4L877.7 693.7M912.5 693.7L896.6 693.4M896.6 693.4L896.5 677.7M325.9 710.7L325.4 726.3M325.4 726.3L324.8 741.8M324.8 741.8L324.3 757.4M324.3 757.4L323.7 773M323.7 773L308.2 773.5M308.2 773.5L292.7 773.9M292.7 773.9L277.2 774.4M277.2 774.4L261.7 774.8M326.7 776L323.7 773M326.9 695.1L340.8 697.4M340.8 697.4L354.6 699.7M354.6 699.7L368.5 702M368.5 702L382.3 704.3M382.3 704.3L396.2 706.6M396.2 706.6L398.4 720.3M398.4 720.3L400.6 734.1M400.6 734.1L402.7 747.8M402.7 747.8L404.9 761.5M404.9 761.5L407.1 775.2M407.9 694.9L396.2 706.6M391.6 774.8L376.1 774.3M376.1 774.3L360.7 773.9M360.7 773.9L345.2 773.4M345.2 773.4L329.7 773M329.7 773L329.1 757.4M329.1 757.4L328.6 741.8M328.6 741.8L328 726.3M328 726.3L327.5 710.7M326.7 776L329.7 773M419.6 706.6L433.5 704.3M433.5 704.3L447.4 701.9M447.4 701.9L461.3 699.6M461.3 699.6L475.2 697.3M475.2 697.3L489.1 694.9M407.9 694.9L419.6 706.6M408.7 775.2L410.9 761.5M410.9 761.5L413.1 747.8M413.1 747.8L415.2 734.1M415.2 734.1L417.4 720.3M417.4 720.3L419.6 706.6M731.5 696.1L729.4 709.7M729.4 709.7L727.2 723.3M727.2 723.3L725 736.8M725 736.8L722.9 750.4M722.9 750.4L720.7 764M720.7 764L706.9 766.4M706.9 766.4L693 768.8M693 768.8L679.2 771.2M679.2 771.2L665.4 773.6M665.4 773.6L651.5 776M732.7 776L720.7 764M813.9 776L800.1 773.6M800.1 773.6L786.2 771.2M786.2 771.2L772.4 768.8M772.4 768.8L758.6 766.4M758.6 766.4L744.7 764M744.7 764L742.6 750.4M742.6 750.4L740.4 736.8M740.4 736.8L738.2 723.3M738.2 723.3L736.1 709.7M736.1 709.7L733.9 696.1M732.7 776L744.7 764M877.7 696.1L893.6 696.4M893.6 696.4L893.8 712.2M896.6 696.4L912.5 696.2M896.5 712.2L896.6 696.4M261.7 777.2L277.2 777.6M277.2 777.6L292.7 778.1M292.7 778.1L308.2 778.5M308.2 778.5L323.7 779M323.7 779L323.7 854.1M326.7 776L323.7 779M323.7 854.1L308.2 854.5M308.2 854.5L292.7 855M292.7 855L277.2 855.5M277.2 855.5L261.7 855.9M326.7 857.1L323.7 854.1M329.7 779L345.2 778.6M345.2 778.6L360.7 778.1M360.7 778.1L376.1 777.7M376.1 777.7L391.6 777.2M326.7 776L329.7 779M391.3 855.5L375.9 855.2M375.9 855.2L360.5 854.8M360.5 854.8L345.1 854.4M345.1 854.4L329.7 854.1M329.7 854.1L329.7 779M326.7 857.1L329.7 854.1M489.1 776L487.4 790.5M487.4 790.5L485.7 805M485.7 805L484 819.5M484 819.5L482.3 834.1M482.3 834.1L480.6 848.6M480.6 848.6L466.3 850M466.3 850L452 851.5M452 851.5L437.7 853M437.7 853L423.4 854.4M423.4 854.4L409.1 855.9M489.1 857.1L480.6 848.6M570.3 857.1L555.8 855.4M555.8 855.4L541.2 853.7M541.2 853.7L526.7 852M526.7 852L512.2 850.3M512.2 850.3L497.6 848.6M497.6 848.6L495.9 834.1M495.9 834.1L494.2 819.5M494.2 819.5L492.5 805M492.5 805L490.8 790.5M490.8 790.5L489.1 776M489.1 857.1L497.6 848.6M651.5 776L665.4 778.4M665.4 778.4L679.2 780.8M679.2 780.8L693 783.2M693 783.2L706.9 785.6M706.9 785.6L720.7 788M720.7 788L723 801.7M723 801.7L725.2 815.3M725.2 815.3L727.4 829M727.4 829L729.7 842.6M729.7 842.6L731.9 856.3M732.7 776L720.7 788M744.7 788L758.6 785.6M758.6 785.6L772.4 783.2M772.4 783.2L786.2 780.8M786.2 780.8L800.1 778.4M800.1 778.4L813.9 776M732.7 776L744.7 788M733.5 856.3L735.8 842.6M735.8 842.6L738 829M738 829L740.2 815.3M740.2 815.3L742.5 801.7M742.5 801.7L744.7 788M893.9 792.1L893.3 807.5M893.3 807.5L892.8 822.8M892.8 822.8L892.2 838.2M892.2 838.2L891.6 853.6M891.6 853.6L876.1 854.3M876.1 854.3L860.6 855M860.6 855L845 855.7M845 855.7L829.5 856.4M895.1 857.1L891.6 853.6M975.1 792.1L974.5 807.5M974.5 807.5L974 822.8M974 822.8L973.4 838.2M973.4 838.2L972.8 853.6M972.8 853.6L898.6 853.6M976.3 857.1L972.8 853.6M898.6 853.6L898.1 838.2M898.1 838.2L897.5 822.8M897.5 822.8L897 807.5M897 807.5L896.4 792.1M895.1 857.1L898.6 853.6M1056.2 839.8L1056 855.6M1056 855.6L1040.8 855.2M1040.8 855.2L1025.6 854.8M1025.6 854.8L1010.3 854.4M1010.3 854.4L995.1 854M995.1 854L979.8 853.6M979.8 853.6L979.3 838.2M979.3 838.2L978.7 822.8M978.7 822.8L978.2 807.5M978.2 807.5L977.6 792.1M976.3 857.1L979.8 853.6M1074.7 855.6L1059 855.6M1059 855.6L1058.9 839.8M261.7 858.2L277.2 858.7M277.2 858.7L292.7 859.2M292.7 859.2L308.2 859.6M308.2 859.6L323.7 860.1M323.7 860.1L321.2 932.7M326.7 857.1L323.7 860.1M321.2 932.7L306.2 933.6M306.2 933.6L291.2 934.6M291.2 934.6L276.2 935.5M276.2 935.5L261.2 936.5M261.2 936.5L246.2 937.5M326.7 938.2L321.2 932.7M329.7 860.1L345.1 859.7M345.1 859.7L360.5 859.4M360.5 859.4L375.9 859M375.9 859L391.3 858.6M326.7 857.1L329.7 860.1M407.7 938L392.6 936.9M392.6 936.9L377.5 935.8M377.5 935.8L362.4 934.8M362.4 934.8L347.3 933.7M347.3 933.7L332.2 932.7M332.2 932.7L329.7 860.1M326.7 938.2L332.2 932.7M409.1 858.3L423.4 859.7M423.4 859.7L437.7 861.2M437.7 861.2L452 862.7M452 862.7L466.3 864.1M466.3 864.1L480.6 865.6M480.6 865.6L482.3 880.1M482.3 880.1L483.9 894.5M483.9 894.5L485.6 909M485.6 909L487.3 923.5M487.3 923.5L488.9 938M489.1 857.1L480.6 865.6M497.6 865.6L512.2 863.9M512.2 863.9L526.7 862.2M526.7 862.2L541.2 860.5M541.2 860.5L555.8 858.8M555.8 858.8L570.3 857.1M489.1 857.1L497.6 865.6M489.3 938L491 923.5M491 923.5L492.6 909M492.6 909L494.3 894.5M494.3 894.5L496 880.1M496 880.1L497.6 865.6M731.9 857.9L730.2 872M730.2 872L728.4 886.2M728.4 886.2L726.7 900.4M726.7 900.4L725 914.5M725 914.5L723.2 928.7M723.2 928.7L708.9 930.6M708.9 930.6L694.5 932.5M694.5 932.5L680.2 934.4M680.2 934.4L665.9 936.3M665.9 936.3L651.5 938.2M732.7 938.2L723.2 928.7M813.9 938.2L799.6 936.3M799.6 936.3L785.2 934.4M785.2 934.4L770.9 932.5M770.9 932.5L756.6 930.6M756.6 930.6L742.2 928.7M742.2 928.7L740.5 914.5M740.5 914.5L738.7 900.4M738.7 900.4L737 886.2M737 886.2L735.3 872M735.3 872L733.5 857.9M732.7 938.2L742.2 928.7M829.5 857.8L845 858.5M845 858.5L860.6 859.2M860.6 859.2L876.1 859.9M876.1 859.9L891.6 860.6M891.6 860.6L892.1 935.2M895.1 857.1L891.6 860.6M892.1 935.2L876.5 935.8M876.5 935.8L860.9 936.4M860.9 936.4L845.2 937M895.1 938.2L892.1 935.2M898.6 860.6L972.8 860.6M895.1 857.1L898.6 860.6M972.8 860.6L973.3 875.9M973.3 875.9L973.8 891.2M973.8 891.2L974.3 906.5M974.3 906.5L974.8 921.8M974.8 921.8L975.3 937.2M976.3 857.1L972.8 860.6M959.9 936.8L944.5 936.4M944.5 936.4L929 936M929 936L913.6 935.6M913.6 935.6L898.1 935.2M898.1 935.2L898.6 860.6M895.1 938.2L898.1 935.2M979.8 860.6L995.1 860.2M995.1 860.2L1010.3 859.8M1010.3 859.8L1025.6 859.4M1025.6 859.4L1040.8 859M1040.8 859L1056 858.6M976.3 857.1L979.8 860.6M1056 858.6L1056.2 874.4M977.3 937.2L977.8 921.8M977.8 921.8L978.3 906.5M978.3 906.5L978.8 891.2M978.8 891.2L979.3 875.9M979.3 875.9L979.8 860.6M1059 858.6L1074.7 858.5M1058.9 874.4L1059 858.6M246.2 938.9L261.2 939.8M261.2 939.8L276.2 940.8M276.2 940.8L291.2 941.7M291.2 941.7L306.2 942.7M306.2 942.7L321.2 943.7M321.2 943.7L322.1 958.6M322.1 958.6L323 973.5M323 973.5L323.9 988.4M323.9 988.4L324.8 1003.3M324.8 1003.3L325.7 1018.2M326.7 938.2L321.2 943.7M325.7 1018.2L311.1 1017M311.1 1017L296.4 1015.9M296.4 1015.9L281.8 1014.6M281.8 1014.6L267.1 1013.5M267.1 1013.5L252.5 1012.2M252.5 1012.2L251.2 997.6M251.2 997.6L250 982.9M250 982.9L248.7 968.2M248.7 968.2L247.5 953.5M247.5 953.5L246.2 938.9M245.5 1019.2L252.5 1012.2M332.2 943.7L347.3 942.6M347.3 942.6L362.4 941.5M362.4 941.5L377.5 940.5M377.5 940.5L392.6 939.4M392.6 939.4L407.7 938.4M326.7 938.2L332.2 943.7M327.7 1018.2L328.6 1003.3M328.6 1003.3L329.5 988.4M329.5 988.4L330.4 973.5M330.4 973.5L331.3 958.6M331.3 958.6L332.2 943.7M651.5 938.2L665.9 940.1M665.9 940.1L680.2 942M680.2 942L694.5 943.9M694.5 943.9L708.9 945.8M708.9 945.8L723.2 947.7M723.2 947.7L725.1 961.9M725.1 961.9L726.9 976.2M726.9 976.2L728.8 990.5M728.8 990.5L730.7 1004.8M730.7 1004.8L732.5 1019M732.7 938.2L723.2 947.7M742.2 947.7L756.6 945.8M756.6 945.8L770.9 943.9M770.9 943.9L785.2 942M785.2 942L799.6 940.1M799.6 940.1L813.9 938.2M732.7 938.2L742.2 947.7M732.9 1019L734.8 1004.8M734.8 1004.8L736.6 990.5M736.6 990.5L738.5 976.2M738.5 976.2L740.4 961.9M740.4 961.9L742.2 947.7M845.2 939.4L860.9 940M860.9 940L876.5 940.6M876.5 940.6L892.1 941.2M892.1 941.2L889.1 1013.2M895.1 938.2L892.1 941.2M889.1 1013.2L874.1 1014.5M874.1 1014.5L859.1 1015.6M859.1 1015.6L844 1016.9M844 1016.9L829 1018M829 1018L813.9 1019.2M895.1 1019.2L889.1 1013.2M898.1 941.2L913.6 940.8M913.6 940.8L929 940.4M929 940.4L944.5 940M944.5 940L959.9 939.6M895.1 938.2L898.1 941.2M976.3 1019.2L961.3 1018M961.3 1018L946.3 1016.9M946.3 1016.9L931.2 1015.6M931.2 1015.6L916.2 1014.5M916.2 1014.5L901.1 1013.2M901.1 1013.2L898.1 941.2M895.1 1019.2L901.1 1013.2M1138 938.9L1135.4 952.2M1135.4 952.2L1132.8 965.5M1132.8 965.5L1130.2 978.8M1130.2 978.8L1127.6 992.1M1127.6 992.1L1124.9 1005.5M1124.9 1005.5L1111.5 1008.2M1111.5 1008.2L1098 1011M1098 1011L1084.5 1013.7M1084.5 1013.7L1071 1016.5M1071 1016.5L1057.5 1019.2M1138.7 1019.2L1124.9 1005.5M1219.5 938.6L1217.4 952.5M1217.4 952.5L1215.3 966.4M1215.3 966.4L1213.2 980.4M1213.2 980.4L1211.1 994.3M1211.1 994.3L1209 1008.2M1209 1008.2L1152.5 1005.5M1220 1019.2L1209 1008.2M1152.5 1005.5L1149.9 992.1M1149.9 992.1L1147.3 978.8M1147.3 978.8L1144.7 965.5M1144.7 965.5L1142.1 952.2M1142.1 952.2L1139.4 938.9M1138.7 1019.2L1152.5 1005.5" stroke-opacity="0.90" stroke-width="0.8"/><path d="M732.7 127.3L749 127.3M749 127.3L765.2 127.3M765.2 127.3L781.4 127.3M781.4 127.3L797.7 127.3M797.7 127.3L813.9 127.3M813.9 127.3L895.1 127.3M895.1 127.3L976.3 127.3M976.3 127.3L992.6 127.3M992.6 127.3L1008.8 127.3M1008.8 127.3L1025.1 127.3M1025.1 127.3L1041.3 127.3M1041.3 127.3L1057.5 127.3M1138.7 127.3L1220 127.3M261.7 208.4L278 208.4M278 208.4L294.2 208.4M294.2 208.4L310.5 208.4M310.5 208.4L326.7 208.4M326.7 208.4L342.9 208.4M342.9 208.4L359.2 208.4M359.2 208.4L375.4 208.4M375.4 208.4L391.7 208.4M813.9 208.4L830.2 208.4M830.2 208.4L846.4 208.4M846.4 208.4L862.7 208.4M862.7 208.4L878.9 208.4M878.9 208.4L895.1 208.4M895.1 208.4L976.3 208.4M976.3 208.4L992.6 208.4M992.6 208.4L1008.8 208.4M1008.8 208.4L1025.1 208.4M1025.1 208.4L1041.3 208.4M1041.3 208.4L1057.5 208.4M245.5 370.6L261.7 370.6M261.7 370.6L278 370.6M278 370.6L294.2 370.6M294.2 370.6L310.5 370.6M570.3 370.6L586.6 370.6M586.6 370.6L602.8 370.6M602.8 370.6L619 370.6M619 370.6L635.3 370.6M635.3 370.6L651.5 370.6M651.5 370.6L667.8 370.6M667.8 370.6L684 370.6M684 370.6L700.2 370.6M700.2 370.6L716.5 370.6M716.5 370.6L732.7 370.6M1073.8 370.6L1090 370.6M1090 370.6L1106.3 370.6M1106.3 370.6L1122.5 370.6M1122.5 370.6L1138.7 370.6M1138.7 370.6L1220 370.6M326.7 532.8L342.9 532.8M342.9 532.8L359.2 532.8M359.2 532.8L375.4 532.8M375.4 532.8L391.7 532.8M391.7 532.8L407.9 532.8M407.9 532.8L424.1 532.8M424.1 532.8L440.4 532.8M440.4 532.8L456.6 532.8M456.6 532.8L472.9 532.8M472.9 532.8L489.1 532.8M992.6 532.8L1008.8 532.8M1008.8 532.8L1025.1 532.8M1025.1 532.8L1041.3 532.8M1041.3 532.8L1057.5 532.8M1057.5 532.8L1073.8 532.8M1073.8 532.8L1090 532.8M1090 532.8L1106.3 532.8M1106.3 532.8L1122.5 532.8M862.7 613.8L878.9 613.8M878.9 613.8L895.1 613.8M895.1 613.8L911.4 613.8M911.4 613.8L927.6 613.8M326.7 694.9L342.9 694.9M342.9 694.9L359.2 694.9M359.2 694.9L375.4 694.9M375.4 694.9L391.7 694.9M391.7 694.9L407.9 694.9M407.9 694.9L424.1 694.9M424.1 694.9L440.4 694.9M440.4 694.9L456.6 694.9M456.6 694.9L472.9 694.9M472.9 694.9L489.1 694.9M684 694.9L700.2 694.9M700.2 694.9L716.5 694.9M716.5 694.9L732.7 694.9M732.7 694.9L749 694.9M749 694.9L765.2 694.9M846.4 694.9L862.7 694.9M862.7 694.9L878.9 694.9M878.9 694.9L895.1 694.9M895.1 694.9L911.4 694.9M911.4 694.9L927.6 694.9M927.6 694.9L943.9 694.9M245.5 776L261.7 776M261.7 776L278 776M278 776L294.2 776M294.2 776L310.5 776M310.5 776L326.7 776M326.7 776L342.9 776M342.9 776L359.2 776M359.2 776L375.4 776M375.4 776L391.7 776M391.7 776L407.9 776M651.5 776L667.8 776M667.8 776L684 776M684 776L700.2 776M700.2 776L716.5 776M716.5 776L732.7 776M732.7 776L749 776M749 776L765.2 776M765.2 776L781.4 776M781.4 776L797.7 776M797.7 776L813.9 776M245.5 857.1L261.7 857.1M261.7 857.1L278 857.1M278 857.1L294.2 857.1M294.2 857.1L310.5 857.1M310.5 857.1L326.7 857.1M326.7 857.1L342.9 857.1M342.9 857.1L359.2 857.1M359.2 857.1L375.4 857.1M375.4 857.1L391.7 857.1M391.7 857.1L407.9 857.1M407.9 857.1L424.1 857.1M424.1 857.1L440.4 857.1M440.4 857.1L456.6 857.1M456.6 857.1L472.9 857.1M472.9 857.1L489.1 857.1M489.1 857.1L505.4 857.1M505.4 857.1L521.6 857.1M521.6 857.1L537.8 857.1M537.8 857.1L554.1 857.1M554.1 857.1L570.3 857.1M813.9 857.1L830.2 857.1M830.2 857.1L846.4 857.1M846.4 857.1L862.7 857.1M862.7 857.1L878.9 857.1M878.9 857.1L895.1 857.1M895.1 857.1L976.3 857.1M976.3 857.1L992.6 857.1M992.6 857.1L1008.8 857.1M1008.8 857.1L1025.1 857.1M1025.1 857.1L1041.3 857.1M1041.3 857.1L1057.5 857.1M1057.5 857.1L1073.8 857.1M1073.8 857.1L1090 857.1M1090 857.1L1106.3 857.1M1106.3 857.1L1122.5 857.1M1122.5 857.1L1138.7 857.1M1138.7 857.1L1155 857.1M1155 857.1L1171.2 857.1M1171.2 857.1L1187.5 857.1M1187.5 857.1L1203.7 857.1M245.5 938.2L261.7 938.2M261.7 938.2L278 938.2M278 938.2L294.2 938.2M294.2 938.2L310.5 938.2M310.5 938.2L326.7 938.2M326.7 938.2L342.9 938.2M342.9 938.2L359.2 938.2M359.2 938.2L375.4 938.2M375.4 938.2L391.7 938.2M391.7 938.2L407.9 938.2M651.5 938.2L667.8 938.2M667.8 938.2L684 938.2M684 938.2L700.2 938.2M700.2 938.2L716.5 938.2M716.5 938.2L732.7 938.2M732.7 938.2L749 938.2M749 938.2L765.2 938.2M765.2 938.2L781.4 938.2M781.4 938.2L797.7 938.2M797.7 938.2L813.9 938.2M813.9 938.2L830.2 938.2M830.2 938.2L846.4 938.2M846.4 938.2L862.7 938.2M862.7 938.2L878.9 938.2M878.9 938.2L895.1 938.2M895.1 938.2L911.4 938.2M911.4 938.2L927.6 938.2M927.6 938.2L943.9 938.2M943.9 938.2L960.1 938.2M960.1 938.2L976.3 938.2M326.7 143.5L326.7 159.8M326.7 159.8L326.7 176M326.7 176L326.7 192.2M326.7 192.2L326.7 208.4M326.7 208.4L326.7 224.6M326.7 224.6L326.7 240.8M326.7 240.8L326.7 257.1M326.7 257.1L326.7 273.3M326.7 694.9L326.7 711.1M326.7 711.1L326.7 727.4M326.7 727.4L326.7 743.6M326.7 743.6L326.7 759.8M326.7 759.8L326.7 776M326.7 776L326.7 857.1M326.7 857.1L326.7 938.2M326.7 938.2L326.7 954.4M326.7 954.4L326.7 970.6M326.7 970.6L326.7 986.8M326.7 986.8L326.7 1003M326.7 1003L326.7 1019.2M407.9 46.2L407.9 62.5M407.9 62.5L407.9 78.7M407.9 78.7L407.9 94.9M407.9 94.9L407.9 111.1M407.9 111.1L407.9 127.3M407.9 451.7L407.9 467.9M407.9 467.9L407.9 484.1M407.9 484.1L407.9 500.3M407.9 500.3L407.9 516.5M407.9 516.5L407.9 532.8M407.9 532.8L407.9 549M407.9 549L407.9 565.2M407.9 565.2L407.9 581.4M407.9 581.4L407.9 597.6M407.9 597.6L407.9 613.8M407.9 613.8L407.9 630M407.9 630L407.9 646.3M407.9 646.3L407.9 662.5M407.9 662.5L407.9 678.7M407.9 678.7L407.9 694.9M407.9 694.9L407.9 711.1M407.9 711.1L407.9 727.4M407.9 727.4L407.9 743.6M407.9 743.6L407.9 759.8M407.9 759.8L407.9 776M407.9 792.2L407.9 808.4M407.9 808.4L407.9 824.6M407.9 824.6L407.9 840.9M407.9 840.9L407.9 857.1M407.9 857.1L407.9 873.3M407.9 873.3L407.9 889.5M407.9 889.5L407.9 905.7M489.1 776L489.1 792.2M489.1 792.2L489.1 808.4M489.1 808.4L489.1 824.6M489.1 824.6L489.1 840.9M489.1 840.9L489.1 857.1M489.1 857.1L489.1 873.3M489.1 873.3L489.1 889.5M489.1 889.5L489.1 905.7M489.1 905.7L489.1 921.9M489.1 921.9L489.1 938.2M651.5 289.5L651.5 305.7M651.5 305.7L651.5 321.9M651.5 321.9L651.5 338.1M651.5 338.1L651.5 354.4M651.5 354.4L651.5 370.6M651.5 370.6L651.5 386.8M651.5 386.8L651.5 403M651.5 403L651.5 419.2M651.5 419.2L651.5 435.4M651.5 435.4L651.5 451.7M732.7 46.2L732.7 62.5M732.7 62.5L732.7 78.7M732.7 78.7L732.7 94.9M732.7 94.9L732.7 111.1M732.7 111.1L732.7 127.3M732.7 630L732.7 646.3M732.7 646.3L732.7 662.5M732.7 662.5L732.7 678.7M732.7 678.7L732.7 694.9M732.7 694.9L732.7 711.1M732.7 711.1L732.7 727.4M732.7 727.4L732.7 743.6M732.7 743.6L732.7 759.8M732.7 759.8L732.7 776M732.7 776L732.7 792.2M732.7 792.2L732.7 808.4M732.7 808.4L732.7 824.6M732.7 824.6L732.7 840.9M732.7 840.9L732.7 857.1M732.7 857.1L732.7 873.3M732.7 873.3L732.7 889.5M732.7 889.5L732.7 905.7M732.7 905.7L732.7 921.9M732.7 921.9L732.7 938.2M732.7 938.2L732.7 954.4M732.7 954.4L732.7 970.6M732.7 970.6L732.7 986.8M732.7 986.8L732.7 1003M732.7 1003L732.7 1019.2M813.9 46.2L813.9 62.5M813.9 62.5L813.9 78.7M813.9 78.7L813.9 94.9M813.9 94.9L813.9 111.1M813.9 111.1L813.9 127.3M813.9 127.3L813.9 143.5M813.9 143.5L813.9 159.8M813.9 159.8L813.9 176M813.9 176L813.9 192.2M813.9 192.2L813.9 208.4M895.1 46.2L895.1 62.5M895.1 62.5L895.1 78.7M895.1 78.7L895.1 94.9M895.1 94.9L895.1 111.1M895.1 111.1L895.1 127.3M895.1 127.3L895.1 208.4M895.1 208.4L895.1 224.6M895.1 224.6L895.1 240.8M895.1 240.8L895.1 257.1M895.1 257.1L895.1 273.3M895.1 273.3L895.1 289.5M895.1 581.4L895.1 597.6M895.1 597.6L895.1 613.8M895.1 613.8L895.1 630M895.1 630L895.1 646.3M895.1 646.3L895.1 662.5M895.1 662.5L895.1 678.7M895.1 678.7L895.1 694.9M895.1 694.9L895.1 711.1M895.1 711.1L895.1 727.4M895.1 727.4L895.1 743.6M895.1 743.6L895.1 759.8M895.1 776L895.1 792.2M895.1 792.2L895.1 808.4M895.1 808.4L895.1 824.6M895.1 824.6L895.1 840.9M895.1 840.9L895.1 857.1M895.1 857.1L895.1 938.2M895.1 938.2L895.1 1019.2M976.3 46.2L976.3 62.5M976.3 62.5L976.3 78.7M976.3 78.7L976.3 94.9M976.3 94.9L976.3 111.1M976.3 111.1L976.3 127.3M976.3 127.3L976.3 208.4M976.3 208.4L976.3 224.6M976.3 224.6L976.3 240.8M976.3 240.8L976.3 257.1M976.3 257.1L976.3 273.3M976.3 273.3L976.3 289.5M976.3 776L976.3 792.2M976.3 792.2L976.3 808.4M976.3 808.4L976.3 824.6M976.3 824.6L976.3 840.9M976.3 840.9L976.3 857.1M976.3 857.1L976.3 873.3M976.3 873.3L976.3 889.5M976.3 889.5L976.3 905.7M976.3 905.7L976.3 921.9M976.3 921.9L976.3 938.2M1057.5 467.9L1057.5 484.1M1057.5 484.1L1057.5 500.3M1057.5 500.3L1057.5 516.5M1057.5 516.5L1057.5 532.8M1057.5 532.8L1057.5 549M1057.5 549L1057.5 565.2M1057.5 565.2L1057.5 581.4M1057.5 581.4L1057.5 597.6M1057.5 792.2L1057.5 808.4M1057.5 808.4L1057.5 824.6M1057.5 824.6L1057.5 840.9M1057.5 840.9L1057.5 857.1M1057.5 857.1L1057.5 873.3M1057.5 873.3L1057.5 889.5M1057.5 889.5L1057.5 905.7M1057.5 905.7L1057.5 921.9M1138.7 46.2L1138.7 127.3M1138.7 305.7L1138.7 321.9M1138.7 321.9L1138.7 338.1M1138.7 338.1L1138.7 354.4M1138.7 354.4L1138.7 370.6M1138.7 370.6L1138.7 386.8M1138.7 386.8L1138.7 403M1138.7 403L1138.7 419.2M1138.7 419.2L1138.7 435.4M1138.7 792.2L1138.7 808.4M1138.7 808.4L1138.7 824.6M1138.7 824.6L1138.7 840.9M1138.7 840.9L1138.7 857.1M1138.7 857.1L1138.7 873.3M1138.7 873.3L1138.7 889.5M1138.7 889.5L1138.7 905.7M1138.7 905.7L1138.7 921.9M1138.7 938.2L1138.7 954.4M1138.7 954.4L1138.7 970.6M1138.7 970.6L1138.7 986.8M1138.7 986.8L1138.7 1003M1138.7 1003L1138.7 1019.2" stroke-opacity="0.90" stroke-width="1.1"/><path d="M326.7 46.2L342.9 46.2M342.9 46.2L359.2 46.2M359.2 46.2L375.4 46.2M375.4 46.2L391.7 46.2M391.7 46.2L407.9 46.2M407.9 46.2L424.1 46.2M424.1 46.2L440.4 46.2M440.4 46.2L456.6 46.2M456.6 46.2L472.9 46.2M472.9 46.2L489.1 46.2M651.5 46.2L667.8 46.2M667.8 46.2L684 46.2M684 46.2L700.2 46.2M700.2 46.2L716.5 46.2M716.5 46.2L732.7 46.2M732.7 46.2L749 46.2M749 46.2L765.2 46.2M765.2 46.2L781.4 46.2M781.4 46.2L797.7 46.2M797.7 46.2L813.9 46.2M1138.7 46.2L1220 46.2M245.5 1019.2L261.7 1019.2M261.7 1019.2L278 1019.2M278 1019.2L294.2 1019.2M294.2 1019.2L310.5 1019.2M310.5 1019.2L326.7 1019.2M813.9 1019.2L830.2 1019.2M830.2 1019.2L846.4 1019.2M846.4 1019.2L862.7 1019.2M862.7 1019.2L878.9 1019.2M878.9 1019.2L895.1 1019.2M895.1 1019.2L911.4 1019.2M911.4 1019.2L927.6 1019.2M927.6 1019.2L943.9 1019.2M943.9 1019.2L960.1 1019.2M960.1 1019.2L976.3 1019.2M1057.5 1019.2L1073.8 1019.2M1073.8 1019.2L1090 1019.2M1090 1019.2L1106.3 1019.2M1106.3 1019.2L1122.5 1019.2M1122.5 1019.2L1138.7 1019.2M1138.7 1019.2L1220 1019.2M245.5 305.7L245.5 321.9M245.5 321.9L245.5 338.1M245.5 338.1L245.5 354.4M245.5 354.4L245.5 370.6M245.5 370.6L245.5 386.8M245.5 386.8L245.5 403M245.5 403L245.5 419.2M245.5 419.2L245.5 435.4M245.5 938.2L245.5 954.4M245.5 954.4L245.5 970.6M245.5 970.6L245.5 986.8M245.5 986.8L245.5 1003M245.5 1003L245.5 1019.2M1220 46.2L1220 127.3M1220 289.5L1220 305.7M1220 305.7L1220 321.9M1220 321.9L1220 338.1M1220 338.1L1220 354.4M1220 354.4L1220 370.6M1220 370.6L1220 386.8M1220 386.8L1220 403M1220 403L1220 419.2M1220 419.2L1220 435.4M1220 435.4L1220 451.7M1220 938.2L1220 954.4M1220 954.4L1220 970.6M1220 970.6L1220 986.8M1220 986.8L1220 1003M1220 1003L1220 1019.2" stroke-opacity="0.90" stroke-width="1.2"/></g>
<rect x="1500.7" y="0" width="1.4" height="1072" fill="#5e5e5e"/>
</svg>
<div class="b" style="left:1502px;top:0px;width:4px;height:1072px;background:#232323;"></div>
<div class="b" style="left:1506px;top:0px;width:904px;height:1072px;background:#2b2b2b;"></div>
<div class="b" style="left:1505.5px;top:5.2px;width:904.5px;height:1.5px;background:#212121;"></div>
<div class="b" style="left:1505.5px;top:6.7px;width:894.2px;height:38.7px;background:#252525;"></div>
<div class="b" style="left:1505.5px;top:46.4px;width:208px;height:39px;background:#2d2d2d;"></div>
<div class="b" style="left:1713.8px;top:7px;width:1.8px;height:194px;background:#242424;"></div>
<div class="b" style="left:1505.5px;top:200.9px;width:904.5px;height:2.3px;background:#1f1f1f;"></div>
<div class="b" style="left:1505.5px;top:204px;width:904.5px;height:25.4px;background:#1f1f1f;"></div>
<div class="b" style="left:1505.5px;top:229.4px;width:904.5px;height:38.4px;background:#2c2c2c;"></div>
<div class="b" style="left:1505.5px;top:267.6px;width:904.5px;height:1.6px;background:#222222;"></div>
<div class="b" style="left:2408.4px;top:0px;width:1.6px;height:1072px;background:#242424;"></div>
<div class="b" style="left:2245.9px;top:276.8px;width:150.9px;height:27.4px;background:#3a3a3a;border-radius:11px;"></div>
<span class="t" style="left:1569.8px;top:20.33px;font-size:16.5px;letter-spacing:0.03px;color:#c6c6c6;">mtInset</span>
<span class="t" style="left:1594.5px;top:59.63px;font-size:16.5px;letter-spacing:-1px;color:#c6c6c6;">Plane</span>
<span class="t" style="left:1543px;top:210.73px;font-size:16.5px;letter-spacing:0.2px;color:#dedede;">Attributes</span>
<span class="t" style="left:1552.2px;top:242.93px;font-size:16.5px;letter-spacing:0.34px;color:#b6b6b6;">Mode</span>
<span class="t" style="left:1616.6px;top:242.93px;font-size:16.5px;letter-spacing:-0.54px;color:#b6b6b6;">Edit</span>
<span class="t" style="left:1666px;top:242.93px;font-size:16.5px;letter-spacing:-0.48px;color:#b6b6b6;">User Data</span>
<span class="t" style="left:1554.8px;top:281.53px;font-size:16.5px;letter-spacing:0.08px;color:#bdbdbd;">mtInset Object [mtInset]</span>
<span class="t" style="left:2256.9px;top:281.53px;font-size:16.5px;letter-spacing:-0.27px;color:#d0d0d0;">Custom</span>
<div class="b" style="left:1519px;top:313.1px;width:63.7px;height:27.6px;background:#3a3a3a;border-radius:6px;"></div>
<span class="t" style="left:1532.3px;top:319.03px;font-size:16.5px;letter-spacing:-1.09px;color:#d6d6d6;">Basic</span>
<div class="b" style="left:1589.1px;top:313.1px;width:115.1px;height:27.6px;background:#3a3a3a;border-radius:6px;"></div>
<span class="t" style="left:1602.7px;top:319.03px;font-size:16.5px;letter-spacing:-0.11px;color:#d6d6d6;">Coordinates</span>
<div class="b" style="left:1711px;top:313.1px;width:74.5px;height:27.6px;background:#3a3a3a;border-radius:6px;"></div>
<span class="t" style="left:1724.3px;top:319.03px;font-size:16.5px;letter-spacing:-0.1px;color:#d6d6d6;">Object</span>
<div class="b" style="left:1791.5px;top:313.1px;width:100.2px;height:27.6px;background:#5a5fae;border-radius:6px;"></div>
<span class="t" style="left:1805.5px;top:319.03px;font-size:16.5px;letter-spacing:-0.4px;color:#f2f2f2;">Selections</span>
<div class="b" style="left:1898.2px;top:313.1px;width:98.4px;height:27.6px;background:#3a3a3a;border-radius:6px;"></div>
<span class="t" style="left:1911.8px;top:319.03px;font-size:16.5px;letter-spacing:-0.27px;color:#d6d6d6;">Advanced</span>
<div class="b" style="left:2003.4px;top:313.1px;width:68.3px;height:27.6px;background:#3a3a3a;border-radius:6px;"></div>
<span class="t" style="left:2017px;top:319.03px;font-size:16.5px;letter-spacing:-0.66px;color:#d6d6d6;">Fields</span>
<span class="t" style="left:1519px;top:356.77px;font-size:17.4px;letter-spacing:-0.14px;color:#f0f0f0;">Selections</span>
<span class="t" style="left:1552.2px;top:389.93px;font-size:16.5px;letter-spacing:-0.7px;color:#b2b2b2;">Inner Faces</span>
<span class="t" style="left:1741.1px;top:389.93px;font-size:16.5px;letter-spacing:-0.27px;color:#b2b2b2;">Display Selection</span>
<span class="t" style="left:1950.9px;top:389.93px;font-size:16.5px;letter-spacing:-0.16px;color:#b2b2b2;">Color</span>
<div class="b" style="left:1662.4px;top:388.7px;width:18.3px;height:18.3px;background:#5a5fae;border-radius:4px;"></div>
<div class="b" style="left:1872.3px;top:388.7px;width:18.3px;height:18.3px;background:#5a5fae;border-radius:4px;"></div>
<div class="b" style="left:2010.9px;top:382.9px;width:101.2px;height:25px;background:#202020;"></div>
<div class="b" style="left:2011.9px;top:383.9px;width:99.2px;height:23px;background:#9ddf7f;"></div>
<span class="t" style="left:1552.2px;top:419.93px;font-size:16.5px;letter-spacing:-0.64px;color:#b2b2b2;">Outer Faces</span>
<span class="t" style="left:1741.1px;top:419.93px;font-size:16.5px;letter-spacing:-0.27px;color:#b2b2b2;">Display Selection</span>
<span class="t" style="left:1950.9px;top:419.93px;font-size:16.5px;letter-spacing:-0.16px;color:#b2b2b2;">Color</span>
<div class="b" style="left:1662.4px;top:418.7px;width:18.3px;height:18.3px;background:#5a5fae;border-radius:4px;"></div>
<div class="b" style="left:1872.3px;top:418.7px;width:18.3px;height:18.3px;background:#5a5fae;border-radius:4px;"></div>
<div class="b" style="left:2010.9px;top:412.9px;width:101.2px;height:25px;background:#202020;"></div>
<div class="b" style="left:2011.9px;top:413.9px;width:99.2px;height:23px;background:#f1d262;"></div>
<span class="t" style="left:1552.2px;top:450.03px;font-size:16.5px;letter-spacing:0.18px;color:#b2b2b2;">Non-extruded</span>
<span class="t" style="left:1741.1px;top:450.03px;font-size:16.5px;letter-spacing:-0.27px;color:#b2b2b2;">Display Selection</span>
<span class="t" style="left:1950.9px;top:450.03px;font-size:16.5px;letter-spacing:-0.16px;color:#b2b2b2;">Color</span>
<div class="b" style="left:1662.4px;top:448.8px;width:18.3px;height:18.3px;background:#5a5fae;border-radius:4px;"></div>
<div class="b" style="left:1872.3px;top:448.8px;width:18.3px;height:18.3px;background:#5a5fae;border-radius:4px;"></div>
<div class="b" style="left:2010.9px;top:443px;width:101.2px;height:25px;background:#202020;"></div>
<div class="b" style="left:2011.9px;top:444px;width:99.2px;height:23px;background:#78b4e8;"></div>
<svg class="ic" width="2410" height="1072" viewBox="0 0 2410 1072">
<path d="M1520.1 8.1V21.2" stroke="#636363" stroke-width="1.6" fill="none"/>
<rect x="1512.9" y="21.85" width="12.4" height="12.5" fill="#252525" stroke="#7e7e7e" stroke-width="1.6"/>
<path d="M1515.2 28.1H1523" stroke="#9c9c9c" stroke-width="1.7"/>
<path d="M1526.1 29H1531.8" stroke="#636363" stroke-width="1.6"/>
<path d="M1544.2 47.4V67.9H1555.8" stroke="#5c5c5c" stroke-width="1.7" fill="none"/>
<g transform="translate(1531.5 12.95) scale(1.04)"><rect x="0" y="0" width="30" height="30" rx="3.5" fill="#0a0a0a"/><rect x="1.35" y="1.35" width="27.3" height="27.3" rx="2.2" fill="#3df7b1"/><path d="M1.5 1.5L8 8M28.5 1.5L22 8M28.5 28.5L22 22M1.5 28.5L8 22" stroke="#0a0a0a" stroke-width="1.3"/><rect x="6.6" y="6.6" width="16.8" height="16.8" fill="#0a0a0a"/><rect x="7.6" y="7.6" width="14.8" height="14.8" fill="#ffffff"/></g>
<g transform="translate(1515.9 274.7) scale(1.03)"><rect x="0" y="0" width="30" height="30" rx="3.5" fill="#0a0a0a"/><rect x="1.35" y="1.35" width="27.3" height="27.3" rx="2.2" fill="#3df7b1"/><path d="M1.5 1.5L8 8M28.5 1.5L22 8M28.5 28.5L22 22M1.5 28.5L8 22" stroke="#0a0a0a" stroke-width="1.3"/><rect x="6.6" y="6.6" width="16.8" height="16.8" fill="#0a0a0a"/><rect x="7.6" y="7.6" width="14.8" height="14.8" fill="#ffffff"/></g>
<path d="M1557.9 67.5L1571.6 58.7L1585.3 67.5L1571.6 76.3Z" fill="#90ddfd" stroke="#16323a" stroke-width="1.1" stroke-linejoin="round"/><path d="M1564.75 63.1L1578.45 71.9M1578.45 63.1L1564.75 71.9" stroke="#16404a" stroke-width="1.3" fill="none"/>
<rect x="1648.8" y="19.9" width="15.3" height="15.2" rx="3.2" fill="#5b5b5b"/>
<path d="M1652.3 31.2L1659.8 24.1" stroke="#2f2f2f" stroke-width="2.9" stroke-linecap="round"/>
<circle cx="1677.5" cy="21.7" r="4.4" fill="#646464"/>
<circle cx="1677.5" cy="35" r="4.4" fill="#646464"/>
<path d="M1688.9 27l6 5.6l10.8 -11.2" fill="none" stroke="#6fe28b" stroke-width="3" stroke-linecap="butt" stroke-linejoin="miter"/>
<rect x="1648.8" y="58.7" width="15.3" height="15.2" rx="3.2" fill="#5b5b5b"/>
<path d="M1652.3 70L1659.8 62.9" stroke="#2f2f2f" stroke-width="2.9" stroke-linecap="round"/>
<circle cx="1677.5" cy="60.5" r="4.4" fill="#646464"/>
<circle cx="1677.5" cy="73.8" r="4.4" fill="#646464"/>
<path d="M1688.9 65.8l6 5.6l10.8 -11.2" fill="none" stroke="#6fe28b" stroke-width="3" stroke-linecap="butt" stroke-linejoin="miter"/>
<path d="M1721 38.4L1734.5 15L1748 38.4Z" fill="#bcbcbc"/>
<path d="M1760 38.4L1773.5 15L1787 38.4Z" fill="#bcbcbc"/>
<path d="M1799.2 38.4L1812.7 15L1826.2 38.4Z" fill="#bcbcbc"/>
<path d="M1723 77.4V53.3H1747.4" fill="none" stroke="#a69dff" stroke-width="2.6"/>
<path d="M1727.2 58.2H1740.2A13 12.4 0 0 1 1727.2 70.4Z" fill="#9c90fb"/>
<path d="M1514.2 213.8L1523.2 223.2M1523.2 213.8L1514.2 223.2" stroke="#a8a8a8" stroke-width="2.3"/>
<path d="M1515.3 245.2H1536.8" stroke="#a0a0a0" stroke-width="2.4"/>
<path d="M1515.3 251.2H1536.8" stroke="#a0a0a0" stroke-width="2.4"/>
<path d="M1515.3 257.2H1536.8" stroke="#a0a0a0" stroke-width="2.4"/>
<g fill="none" stroke="#929292" stroke-width="2.5">
<path d="M2190.6 251H2172.5M2182.2 242.2L2172.4 251L2182.2 259.8"/>
<path d="M2241.4 260.8V243.6M2232.3 252L2241.4 242.8L2250.5 252"/>
<circle cx="2269.4" cy="248.6" r="6.6"/><path d="M2274.4 253.6L2281.9 260.8"/>
<path d="M2290.5 245H2312.3M2294.3 251H2308.5M2298 256.9H2304.7" stroke-width="2.6"/>
<circle cx="2361.5" cy="251.2" r="11.1"/><circle cx="2361.5" cy="251.2" r="3.6" stroke-width="2"/>
<path d="M2391.5 242.2H2382.2V259.9H2401V251.5M2387.4 255.2L2401 241.6M2392.5 241.4H2401.2V250"/>
</g>
<path d="M2203 251H2219.5M2211.6 242.4L2220.4 251L2211.6 259.6" fill="none" stroke="#4a4a4a" stroke-width="2.3"/>
<rect x="2322.9" y="248.4" width="17.2" height="13.8" rx="2.2" fill="#ffffff"/>
<path d="M2327.4 249V245.6A4.1 4.3 0 0 1 2335.6 245.6V249" fill="none" stroke="#ffffff" stroke-width="2.4"/>
<circle cx="2331.5" cy="254.8" r="2.2" fill="#2d2d2d"/>
<path d="M2366.3 276.8V304.2" stroke="#2d2d2d" stroke-width="1.4"/>
<path d="M2375.8 287.2H2386.6L2381.2 293Z" fill="#c8c8c8"/>
<path d="M1523 397.9L1529.2 391.7L1535.4 397.9L1529.2 404.1Z" fill="none" stroke="#8c8c8c" stroke-width="1.9" stroke-linejoin="miter"/>
<path d="M1711.8 397.9L1718 391.7L1724.2 397.9L1718 404.1Z" fill="none" stroke="#8c8c8c" stroke-width="1.9" stroke-linejoin="miter"/>
<path d="M1921.7 397.9L1927.9 391.7L1934.1 397.9L1927.9 404.1Z" fill="none" stroke="#8c8c8c" stroke-width="1.9" stroke-linejoin="miter"/>
<path d="M1666.9 398.2l3.6 3.4l6.4 -7" fill="none" stroke="#ffffff" stroke-width="2.2"/>
<path d="M1876.8 398.2l3.6 3.4l6.4 -7" fill="none" stroke="#ffffff" stroke-width="2.2"/>
<path d="M2000.3 391.5L2006.4 397.3L2000.3 403.1" fill="none" stroke="#d2d2d2" stroke-width="2"/>
<g transform="translate(0 0)" stroke="#9c9c9c" fill="none" stroke-width="2.1">
<path d="M2138.2 391.5L2128.05 401.1V404.85H2131.9L2142.6 394.8"/>
<path d="M2136.6 388.8L2144.5 396.5" stroke-width="2.2" stroke-linecap="round"/>
<path d="M2141.2 391.7L2143.6 389.3" stroke-width="5.3" stroke-linecap="round"/>
</g>
<path d="M1523 427.9L1529.2 421.7L1535.4 427.9L1529.2 434.1Z" fill="none" stroke="#8c8c8c" stroke-width="1.9" stroke-linejoin="miter"/>
<path d="M1711.8 427.9L1718 421.7L1724.2 427.9L1718 434.1Z" fill="none" stroke="#8c8c8c" stroke-width="1.9" stroke-linejoin="miter"/>
<path d="M1921.7 427.9L1927.9 421.7L1934.1 427.9L1927.9 434.1Z" fill="none" stroke="#8c8c8c" stroke-width="1.9" stroke-linejoin="miter"/>
<path d="M1666.9 428.2l3.6 3.4l6.4 -7" fill="none" stroke="#ffffff" stroke-width="2.2"/>
<path d="M1876.8 428.2l3.6 3.4l6.4 -7" fill="none" stroke="#ffffff" stroke-width="2.2"/>
<path d="M2000.3 421.5L2006.4 427.3L2000.3 433.1" fill="none" stroke="#d2d2d2" stroke-width="2"/>
<g transform="translate(0 30)" stroke="#9c9c9c" fill="none" stroke-width="2.1">
<path d="M2138.2 391.5L2128.05 401.1V404.85H2131.9L2142.6 394.8"/>
<path d="M2136.6 388.8L2144.5 396.5" stroke-width="2.2" stroke-linecap="round"/>
<path d="M2141.2 391.7L2143.6 389.3" stroke-width="5.3" stroke-linecap="round"/>
</g>
<path d="M1523 458L1529.2 451.8L1535.4 458L1529.2 464.2Z" fill="none" stroke="#8c8c8c" stroke-width="1.9" stroke-linejoin="miter"/>
<path d="M1711.8 458L1718 451.8L1724.2 458L1718 464.2Z" fill="none" stroke="#8c8c8c" stroke-width="1.9" stroke-linejoin="miter"/>
<path d="M1921.7 458L1927.9 451.8L1934.1 458L1927.9 464.2Z" fill="none" stroke="#8c8c8c" stroke-width="1.9" stroke-linejoin="miter"/>
<path d="M1666.9 458.3l3.6 3.4l6.4 -7" fill="none" stroke="#ffffff" stroke-width="2.2"/>
<path d="M1876.8 458.3l3.6 3.4l6.4 -7" fill="none" stroke="#ffffff" stroke-width="2.2"/>
<path d="M2000.3 451.6L2006.4 457.4L2000.3 463.2" fill="none" stroke="#d2d2d2" stroke-width="2"/>
<g transform="translate(0 60.1)" stroke="#9c9c9c" fill="none" stroke-width="2.1">
<path d="M2138.2 391.5L2128.05 401.1V404.85H2131.9L2142.6 394.8"/>
<path d="M2136.6 388.8L2144.5 396.5" stroke-width="2.2" stroke-linecap="round"/>
<path d="M2141.2 391.7L2143.6 389.3" stroke-width="5.3" stroke-linecap="round"/>
</g>
</svg>
</body></html>
